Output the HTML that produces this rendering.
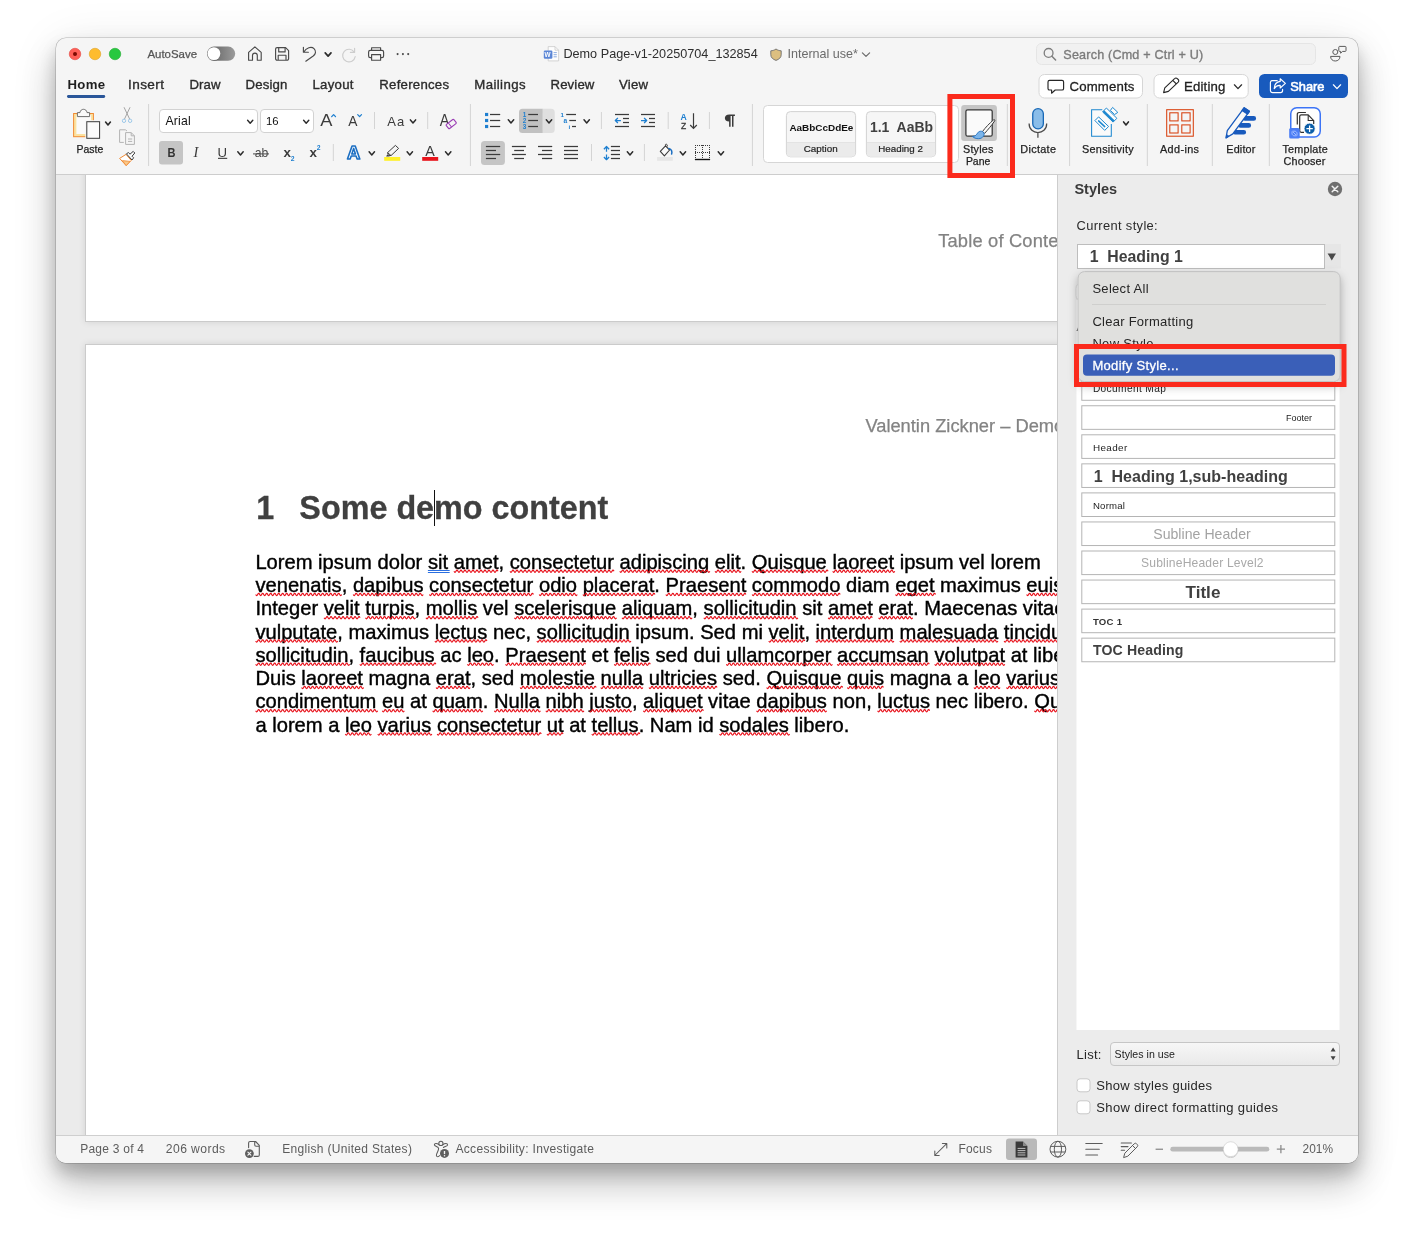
<!DOCTYPE html>
<html lang="en"><head><meta charset="utf-8"><title>Demo Page-v1-20250704_132854</title>
<style>
html,body{margin:0;padding:0;background:#fff;}
body{width:1414px;height:1237px;position:relative;overflow:hidden;font-family:"Liberation Sans",sans-serif;}
#win{position:absolute;left:56px;top:38px;width:1302px;height:1125px;border-radius:10px;background:#f5f5f5;
 box-shadow:0 0 0 0.5px rgba(0,0,0,.26),0 10px 16px rgba(0,0,0,.18),0 22px 36px rgba(0,0,0,.20),0 6px 50px rgba(0,0,0,.09);}
#doc{position:absolute;left:56px;top:175px;width:1001px;height:960px;background:#ebebeb;overflow:hidden;}
.page{position:absolute;background:#fff;border:1px solid #cbcbcb;box-sizing:border-box;box-shadow:0 0 7px rgba(0,0,0,.10);}
#doc .ln{opacity:.999;-webkit-text-stroke:0.4px #000;position:absolute;left:199.4px;white-space:nowrap;font-size:20.17px;line-height:24px;color:#000;}
#doc .hd{opacity:.999;position:absolute;white-space:nowrap;font-size:18.3px;line-height:22px;color:#838383;-webkit-text-stroke:0.25px #838383;}
#doc h1{opacity:.999;position:absolute;margin:0;white-space:pre;font-size:32.33px;line-height:38px;font-weight:700;color:#404040;-webkit-text-stroke:0.3px #404040;}
#ov{position:absolute;left:0;top:0;width:1414px;height:1237px;opacity:.999;}
#ov text{font-family:"Liberation Sans",sans-serif;white-space:pre;}
</style></head>
<body>
<div id="win"></div>
<div id="doc">
<div class="page" style="left:29px;top:-30px;width:1100px;height:177px"></div>
<div class="page" style="left:29px;top:169px;width:1100px;height:900px"></div>
<div class="hd" style="left:882.2px;top:55.1px;letter-spacing:.18px">Table of Contents</div>
<div class="hd" style="left:809.4px;top:240px">Valentin Zickner – Demo Page</div>
<h1 style="left:200.2px;top:313.7px"><span>1</span><span style="margin-left:25.2px">Some demo content</span></h1>
<div style="position:absolute;left:378px;top:315px;width:1px;height:36px;background:#111"></div>
<div class="ln" style="top:374.83px">Lorem ipsum dolor <span class="gr">sit</span> <span class="sq">amet</span>, <span class="sq">consectetur</span> <span class="sq">adipiscing</span> <span class="sq">elit</span>. <span class="sq">Quisque</span> <span class="sq">laoreet</span> ipsum vel lorem</div>
<div class="ln" style="top:398.09px"><span class="sq">venenatis</span>, <span class="sq">dapibus</span> <span class="sq">consectetur</span> <span class="sq">odio</span> <span class="sq">placerat</span>. <span class="sq">Praesent</span> <span class="sq">commodo</span> diam <span class="sq">eget</span> maximus <span class="sq">euismod</span>.</div>
<div class="ln" style="top:421.35px">Integer <span class="sq">velit</span> <span class="sq">turpis</span>, <span class="sq">mollis</span> vel <span class="sq">scelerisque</span> <span class="sq">aliquam</span>, <span class="sq">sollicitudin</span> sit <span class="sq">amet</span> <span class="sq">erat</span>. Maecenas vitae</div>
<div class="ln" style="top:444.61px"><span class="sq">vulputate</span>, maximus <span class="sq">lectus</span> nec, <span class="sq">sollicitudin</span> ipsum. Sed mi <span class="sq">velit</span>, <span class="sq">interdum</span> <span class="sq">malesuada</span> <span class="sq">tincidunt</span></div>
<div class="ln" style="top:467.87px"><span class="sq">sollicitudin</span>, <span class="sq">faucibus</span> ac <span class="sq">leo</span>. <span class="sq">Praesent</span> et <span class="sq">felis</span> sed dui <span class="sq">ullamcorper</span> <span class="sq">accumsan</span> <span class="sq">volutpat</span> at libero.</div>
<div class="ln" style="top:491.13px">Duis <span class="sq">laoreet</span> magna <span class="sq">erat</span>, sed <span class="sq">molestie</span> <span class="sq">nulla</span> <span class="sq">ultricies</span> sed. <span class="sq">Quisque</span> <span class="sq">quis</span> magna a <span class="sq">leo</span> <span class="sq">varius</span></div>
<div class="ln" style="top:514.39px"><span class="sq">condimentum</span> <span class="sq">eu</span> at <span class="sq">quam</span>. <span class="sq">Nulla</span> <span class="sq">nibh</span> <span class="sq">justo</span>, <span class="sq">aliquet</span> vitae <span class="sq">dapibus</span> non, <span class="sq">luctus</span> nec libero. <span class="sq">Quisque</span></div>
<div class="ln" style="top:537.65px">a lorem a <span class="sq">leo</span> <span class="sq">varius</span> <span class="sq">consectetur</span> <span class="sq">ut</span> at <span class="sq">tellus</span>. Nam id <span class="sq">sodales</span> libero.</div>
</div>
<svg style="position:absolute;left:0;top:0" width="1414" height="1237" viewBox="0 0 1414 1237"><path d="M427.9 570.50 H449.7 M427.9 572.50 H449.7" stroke="#2b6fe0" stroke-width="1" fill="none"/><path d="M453.99 571.25 q1.00 2.30 2.00 0 t2.00 0 t2.00 0 t2.00 0 t2.00 0 t2.00 0 t2.00 0 t2.00 0 t2.00 0 t2.00 0 t2.00 0 t2.00 0 t2.00 0 t2.00 0 t2.00 0 t2.00 0 t2.00 0 t2.00 0 t2.00 0 t2.00 0 t2.00 0 t2.00 0" stroke="#e8101a" stroke-width="1.1" fill="none"/><path d="M510.00 571.25 q1.00 2.30 2.00 0 t2.00 0 t2.00 0 t2.00 0 t2.00 0 t2.00 0 t2.00 0 t2.00 0 t2.00 0 t2.00 0 t2.00 0 t2.00 0 t2.00 0 t2.00 0 t2.00 0 t2.00 0 t2.00 0 t2.00 0 t2.00 0 t2.00 0 t2.00 0 t2.00 0 t2.00 0 t2.00 0 t2.00 0 t2.00 0 t2.00 0 t2.00 0 t2.00 0 t2.00 0 t2.00 0 t2.00 0 t2.00 0 t2.00 0 t2.00 0 t2.00 0 t2.00 0 t2.00 0 t2.00 0 t2.00 0 t2.00 0 t2.00 0 t2.00 0 t2.00 0 t2.00 0 t2.00 0 t2.00 0 t2.00 0 t2.00 0 t2.00 0 t2.00 0 t2.00 0" stroke="#e8101a" stroke-width="1.1" fill="none"/><path d="M619.82 571.25 q1.00 2.30 2.00 0 t2.00 0 t2.00 0 t2.00 0 t2.00 0 t2.00 0 t2.00 0 t2.00 0 t2.00 0 t2.00 0 t2.00 0 t2.00 0 t2.00 0 t2.00 0 t2.00 0 t2.00 0 t2.00 0 t2.00 0 t2.00 0 t2.00 0 t2.00 0 t2.00 0 t2.00 0 t2.00 0 t2.00 0 t2.00 0 t2.00 0 t2.00 0 t2.00 0 t2.00 0 t2.00 0 t2.00 0 t2.00 0 t2.00 0 t2.00 0 t2.00 0 t2.00 0 t2.00 0 t2.00 0 t2.00 0 t2.00 0 t2.00 0 t2.00 0 t2.00 0 t2.00 0" stroke="#e8101a" stroke-width="1.1" fill="none"/><path d="M715.07 571.25 q1.00 2.30 2.00 0 t2.00 0 t2.00 0 t2.00 0 t2.00 0 t2.00 0 t2.00 0 t2.00 0 t2.00 0 t2.00 0 t2.00 0 t2.00 0 t2.00 0" stroke="#e8101a" stroke-width="1.1" fill="none"/><path d="M752.05 571.25 q1.00 2.30 2.00 0 t2.00 0 t2.00 0 t2.00 0 t2.00 0 t2.00 0 t2.00 0 t2.00 0 t2.00 0 t2.00 0 t2.00 0 t2.00 0 t2.00 0 t2.00 0 t2.00 0 t2.00 0 t2.00 0 t2.00 0 t2.00 0 t2.00 0 t2.00 0 t2.00 0 t2.00 0 t2.00 0 t2.00 0 t2.00 0 t2.00 0 t2.00 0 t2.00 0 t2.00 0 t2.00 0 t2.00 0 t2.00 0 t2.00 0 t2.00 0 t2.00 0 t2.00 0 t2.00 0" stroke="#e8101a" stroke-width="1.1" fill="none"/><path d="M832.74 571.25 q1.00 2.30 2.00 0 t2.00 0 t2.00 0 t2.00 0 t2.00 0 t2.00 0 t2.00 0 t2.00 0 t2.00 0 t2.00 0 t2.00 0 t2.00 0 t2.00 0 t2.00 0 t2.00 0 t2.00 0 t2.00 0 t2.00 0 t2.00 0 t2.00 0 t2.00 0 t2.00 0 t2.00 0 t2.00 0 t2.00 0 t2.00 0 t2.00 0 t2.00 0 t2.00 0 t2.00 0 t2.00 0" stroke="#e8101a" stroke-width="1.1" fill="none"/><path d="M255.69 594.50 q1.00 2.30 2.00 0 t2.00 0 t2.00 0 t2.00 0 t2.00 0 t2.00 0 t2.00 0 t2.00 0 t2.00 0 t2.00 0 t2.00 0 t2.00 0 t2.00 0 t2.00 0 t2.00 0 t2.00 0 t2.00 0 t2.00 0 t2.00 0 t2.00 0 t2.00 0 t2.00 0 t2.00 0 t2.00 0 t2.00 0 t2.00 0 t2.00 0 t2.00 0 t2.00 0 t2.00 0 t2.00 0 t2.00 0 t2.00 0 t2.00 0 t2.00 0 t2.00 0 t2.00 0 t2.00 0 t2.00 0 t2.00 0 t2.00 0 t2.00 0 t2.00 0" stroke="#e8101a" stroke-width="1.1" fill="none"/><path d="M353.19 594.50 q1.00 2.30 2.00 0 t2.00 0 t2.00 0 t2.00 0 t2.00 0 t2.00 0 t2.00 0 t2.00 0 t2.00 0 t2.00 0 t2.00 0 t2.00 0 t2.00 0 t2.00 0 t2.00 0 t2.00 0 t2.00 0 t2.00 0 t2.00 0 t2.00 0 t2.00 0 t2.00 0 t2.00 0 t2.00 0 t2.00 0 t2.00 0 t2.00 0 t2.00 0 t2.00 0 t2.00 0 t2.00 0 t2.00 0 t2.00 0 t2.00 0 t2.00 0" stroke="#e8101a" stroke-width="1.1" fill="none"/><path d="M429.41 594.50 q1.00 2.30 2.00 0 t2.00 0 t2.00 0 t2.00 0 t2.00 0 t2.00 0 t2.00 0 t2.00 0 t2.00 0 t2.00 0 t2.00 0 t2.00 0 t2.00 0 t2.00 0 t2.00 0 t2.00 0 t2.00 0 t2.00 0 t2.00 0 t2.00 0 t2.00 0 t2.00 0 t2.00 0 t2.00 0 t2.00 0 t2.00 0 t2.00 0 t2.00 0 t2.00 0 t2.00 0 t2.00 0 t2.00 0 t2.00 0 t2.00 0 t2.00 0 t2.00 0 t2.00 0 t2.00 0 t2.00 0 t2.00 0 t2.00 0 t2.00 0 t2.00 0 t2.00 0 t2.00 0 t2.00 0 t2.00 0 t2.00 0 t2.00 0 t2.00 0 t2.00 0 t2.00 0" stroke="#e8101a" stroke-width="1.1" fill="none"/><path d="M539.22 594.50 q1.00 2.30 2.00 0 t2.00 0 t2.00 0 t2.00 0 t2.00 0 t2.00 0 t2.00 0 t2.00 0 t2.00 0 t2.00 0 t2.00 0 t2.00 0 t2.00 0 t2.00 0 t2.00 0 t2.00 0 t2.00 0 t2.00 0 t2.00 0" stroke="#e8101a" stroke-width="1.1" fill="none"/><path d="M582.94 594.50 q1.00 2.30 2.00 0 t2.00 0 t2.00 0 t2.00 0 t2.00 0 t2.00 0 t2.00 0 t2.00 0 t2.00 0 t2.00 0 t2.00 0 t2.00 0 t2.00 0 t2.00 0 t2.00 0 t2.00 0 t2.00 0 t2.00 0 t2.00 0 t2.00 0 t2.00 0 t2.00 0 t2.00 0 t2.00 0 t2.00 0 t2.00 0 t2.00 0 t2.00 0 t2.00 0 t2.00 0 t2.00 0 t2.00 0 t2.00 0 t2.00 0 t2.00 0 t2.00 0" stroke="#e8101a" stroke-width="1.1" fill="none"/><path d="M665.86 594.50 q1.00 2.30 2.00 0 t2.00 0 t2.00 0 t2.00 0 t2.00 0 t2.00 0 t2.00 0 t2.00 0 t2.00 0 t2.00 0 t2.00 0 t2.00 0 t2.00 0 t2.00 0 t2.00 0 t2.00 0 t2.00 0 t2.00 0 t2.00 0 t2.00 0 t2.00 0 t2.00 0 t2.00 0 t2.00 0 t2.00 0 t2.00 0 t2.00 0 t2.00 0 t2.00 0 t2.00 0 t2.00 0 t2.00 0 t2.00 0 t2.00 0 t2.00 0 t2.00 0 t2.00 0 t2.00 0 t2.00 0 t2.00 0" stroke="#e8101a" stroke-width="1.1" fill="none"/><path d="M752.16 594.50 q1.00 2.30 2.00 0 t2.00 0 t2.00 0 t2.00 0 t2.00 0 t2.00 0 t2.00 0 t2.00 0 t2.00 0 t2.00 0 t2.00 0 t2.00 0 t2.00 0 t2.00 0 t2.00 0 t2.00 0 t2.00 0 t2.00 0 t2.00 0 t2.00 0 t2.00 0 t2.00 0 t2.00 0 t2.00 0 t2.00 0 t2.00 0 t2.00 0 t2.00 0 t2.00 0 t2.00 0 t2.00 0 t2.00 0 t2.00 0 t2.00 0 t2.00 0 t2.00 0 t2.00 0 t2.00 0 t2.00 0 t2.00 0 t2.00 0 t2.00 0 t2.00 0 t2.00 0" stroke="#e8101a" stroke-width="1.1" fill="none"/><path d="M895.55 594.50 q1.00 2.30 2.00 0 t2.00 0 t2.00 0 t2.00 0 t2.00 0 t2.00 0 t2.00 0 t2.00 0 t2.00 0 t2.00 0 t2.00 0 t2.00 0 t2.00 0 t2.00 0 t2.00 0 t2.00 0 t2.00 0 t2.00 0 t2.00 0 t2.00 0" stroke="#e8101a" stroke-width="1.1" fill="none"/><path d="M1026.63 594.50 q1.00 2.30 2.00 0 t2.00 0 t2.00 0 t2.00 0 t2.00 0 t2.00 0 t2.00 0 t2.00 0 t2.00 0 t2.00 0 t2.00 0 t2.00 0 t2.00 0 t2.00 0 t2.00 0 t2.00 0 t2.00 0 t2.00 0" stroke="#e8101a" stroke-width="1.1" fill="none"/><path d="M324.05 617.76 q1.00 2.30 2.00 0 t2.00 0 t2.00 0 t2.00 0 t2.00 0 t2.00 0 t2.00 0 t2.00 0 t2.00 0 t2.00 0 t2.00 0 t2.00 0 t2.00 0 t2.00 0 t2.00 0 t2.00 0 t2.00 0 t2.00 0" stroke="#e8101a" stroke-width="1.1" fill="none"/><path d="M365.52 617.76 q1.00 2.30 2.00 0 t2.00 0 t2.00 0 t2.00 0 t2.00 0 t2.00 0 t2.00 0 t2.00 0 t2.00 0 t2.00 0 t2.00 0 t2.00 0 t2.00 0 t2.00 0 t2.00 0 t2.00 0 t2.00 0 t2.00 0 t2.00 0 t2.00 0 t2.00 0 t2.00 0 t2.00 0 t2.00 0 t2.00 0" stroke="#e8101a" stroke-width="1.1" fill="none"/><path d="M426.02 617.76 q1.00 2.30 2.00 0 t2.00 0 t2.00 0 t2.00 0 t2.00 0 t2.00 0 t2.00 0 t2.00 0 t2.00 0 t2.00 0 t2.00 0 t2.00 0 t2.00 0 t2.00 0 t2.00 0 t2.00 0 t2.00 0 t2.00 0 t2.00 0 t2.00 0 t2.00 0 t2.00 0 t2.00 0 t2.00 0 t2.00 0 t2.00 0" stroke="#e8101a" stroke-width="1.1" fill="none"/><path d="M514.50 617.76 q1.00 2.30 2.00 0 t2.00 0 t2.00 0 t2.00 0 t2.00 0 t2.00 0 t2.00 0 t2.00 0 t2.00 0 t2.00 0 t2.00 0 t2.00 0 t2.00 0 t2.00 0 t2.00 0 t2.00 0 t2.00 0 t2.00 0 t2.00 0 t2.00 0 t2.00 0 t2.00 0 t2.00 0 t2.00 0 t2.00 0 t2.00 0 t2.00 0 t2.00 0 t2.00 0 t2.00 0 t2.00 0 t2.00 0 t2.00 0 t2.00 0 t2.00 0 t2.00 0 t2.00 0 t2.00 0 t2.00 0 t2.00 0 t2.00 0 t2.00 0 t2.00 0 t2.00 0 t2.00 0 t2.00 0 t2.00 0 t2.00 0 t2.00 0 t2.00 0 t2.00 0" stroke="#e8101a" stroke-width="1.1" fill="none"/><path d="M622.07 617.76 q1.00 2.30 2.00 0 t2.00 0 t2.00 0 t2.00 0 t2.00 0 t2.00 0 t2.00 0 t2.00 0 t2.00 0 t2.00 0 t2.00 0 t2.00 0 t2.00 0 t2.00 0 t2.00 0 t2.00 0 t2.00 0 t2.00 0 t2.00 0 t2.00 0 t2.00 0 t2.00 0 t2.00 0 t2.00 0 t2.00 0 t2.00 0 t2.00 0 t2.00 0 t2.00 0 t2.00 0 t2.00 0 t2.00 0 t2.00 0 t2.00 0 t2.00 0" stroke="#e8101a" stroke-width="1.1" fill="none"/><path d="M703.86 617.76 q1.00 2.30 2.00 0 t2.00 0 t2.00 0 t2.00 0 t2.00 0 t2.00 0 t2.00 0 t2.00 0 t2.00 0 t2.00 0 t2.00 0 t2.00 0 t2.00 0 t2.00 0 t2.00 0 t2.00 0 t2.00 0 t2.00 0 t2.00 0 t2.00 0 t2.00 0 t2.00 0 t2.00 0 t2.00 0 t2.00 0 t2.00 0 t2.00 0 t2.00 0 t2.00 0 t2.00 0 t2.00 0 t2.00 0 t2.00 0 t2.00 0 t2.00 0 t2.00 0 t2.00 0 t2.00 0 t2.00 0 t2.00 0 t2.00 0 t2.00 0 t2.00 0 t2.00 0 t2.00 0 t2.00 0 t2.00 0" stroke="#e8101a" stroke-width="1.1" fill="none"/><path d="M828.22 617.76 q1.00 2.30 2.00 0 t2.00 0 t2.00 0 t2.00 0 t2.00 0 t2.00 0 t2.00 0 t2.00 0 t2.00 0 t2.00 0 t2.00 0 t2.00 0 t2.00 0 t2.00 0 t2.00 0 t2.00 0 t2.00 0 t2.00 0 t2.00 0 t2.00 0 t2.00 0 t2.00 0" stroke="#e8101a" stroke-width="1.1" fill="none"/><path d="M878.64 617.76 q1.00 2.30 2.00 0 t2.00 0 t2.00 0 t2.00 0 t2.00 0 t2.00 0 t2.00 0 t2.00 0 t2.00 0 t2.00 0 t2.00 0 t2.00 0 t2.00 0 t2.00 0 t2.00 0 t2.00 0 t2.00 0" stroke="#e8101a" stroke-width="1.1" fill="none"/><path d="M255.69 641.03 q1.00 2.30 2.00 0 t2.00 0 t2.00 0 t2.00 0 t2.00 0 t2.00 0 t2.00 0 t2.00 0 t2.00 0 t2.00 0 t2.00 0 t2.00 0 t2.00 0 t2.00 0 t2.00 0 t2.00 0 t2.00 0 t2.00 0 t2.00 0 t2.00 0 t2.00 0 t2.00 0 t2.00 0 t2.00 0 t2.00 0 t2.00 0 t2.00 0 t2.00 0 t2.00 0 t2.00 0 t2.00 0 t2.00 0 t2.00 0 t2.00 0 t2.00 0 t2.00 0 t2.00 0 t2.00 0 t2.00 0 t2.00 0 t2.00 0" stroke="#e8101a" stroke-width="1.1" fill="none"/><path d="M434.94 641.03 q1.00 2.30 2.00 0 t2.00 0 t2.00 0 t2.00 0 t2.00 0 t2.00 0 t2.00 0 t2.00 0 t2.00 0 t2.00 0 t2.00 0 t2.00 0 t2.00 0 t2.00 0 t2.00 0 t2.00 0 t2.00 0 t2.00 0 t2.00 0 t2.00 0 t2.00 0 t2.00 0 t2.00 0 t2.00 0 t2.00 0 t2.00 0" stroke="#e8101a" stroke-width="1.1" fill="none"/><path d="M536.91 641.03 q1.00 2.30 2.00 0 t2.00 0 t2.00 0 t2.00 0 t2.00 0 t2.00 0 t2.00 0 t2.00 0 t2.00 0 t2.00 0 t2.00 0 t2.00 0 t2.00 0 t2.00 0 t2.00 0 t2.00 0 t2.00 0 t2.00 0 t2.00 0 t2.00 0 t2.00 0 t2.00 0 t2.00 0 t2.00 0 t2.00 0 t2.00 0 t2.00 0 t2.00 0 t2.00 0 t2.00 0 t2.00 0 t2.00 0 t2.00 0 t2.00 0 t2.00 0 t2.00 0 t2.00 0 t2.00 0 t2.00 0 t2.00 0 t2.00 0 t2.00 0 t2.00 0 t2.00 0 t2.00 0 t2.00 0 t2.00 0" stroke="#e8101a" stroke-width="1.1" fill="none"/><path d="M768.82 641.03 q1.00 2.30 2.00 0 t2.00 0 t2.00 0 t2.00 0 t2.00 0 t2.00 0 t2.00 0 t2.00 0 t2.00 0 t2.00 0 t2.00 0 t2.00 0 t2.00 0 t2.00 0 t2.00 0 t2.00 0 t2.00 0 t2.00 0" stroke="#e8101a" stroke-width="1.1" fill="none"/><path d="M815.88 641.03 q1.00 2.30 2.00 0 t2.00 0 t2.00 0 t2.00 0 t2.00 0 t2.00 0 t2.00 0 t2.00 0 t2.00 0 t2.00 0 t2.00 0 t2.00 0 t2.00 0 t2.00 0 t2.00 0 t2.00 0 t2.00 0 t2.00 0 t2.00 0 t2.00 0 t2.00 0 t2.00 0 t2.00 0 t2.00 0 t2.00 0 t2.00 0 t2.00 0 t2.00 0 t2.00 0 t2.00 0 t2.00 0 t2.00 0 t2.00 0 t2.00 0 t2.00 0 t2.00 0 t2.00 0 t2.00 0 t2.00 0" stroke="#e8101a" stroke-width="1.1" fill="none"/><path d="M899.91 641.03 q1.00 2.30 2.00 0 t2.00 0 t2.00 0 t2.00 0 t2.00 0 t2.00 0 t2.00 0 t2.00 0 t2.00 0 t2.00 0 t2.00 0 t2.00 0 t2.00 0 t2.00 0 t2.00 0 t2.00 0 t2.00 0 t2.00 0 t2.00 0 t2.00 0 t2.00 0 t2.00 0 t2.00 0 t2.00 0 t2.00 0 t2.00 0 t2.00 0 t2.00 0 t2.00 0 t2.00 0 t2.00 0 t2.00 0 t2.00 0 t2.00 0 t2.00 0 t2.00 0 t2.00 0 t2.00 0 t2.00 0 t2.00 0 t2.00 0 t2.00 0 t2.00 0 t2.00 0 t2.00 0 t2.00 0 t2.00 0 t2.00 0 t2.00 0" stroke="#e8101a" stroke-width="1.1" fill="none"/><path d="M1004.13 641.03 q1.00 2.30 2.00 0 t2.00 0 t2.00 0 t2.00 0 t2.00 0 t2.00 0 t2.00 0 t2.00 0 t2.00 0 t2.00 0 t2.00 0 t2.00 0 t2.00 0 t2.00 0 t2.00 0 t2.00 0 t2.00 0 t2.00 0 t2.00 0 t2.00 0 t2.00 0 t2.00 0 t2.00 0 t2.00 0 t2.00 0 t2.00 0 t2.00 0 t2.00 0 t2.00 0" stroke="#e8101a" stroke-width="1.1" fill="none"/><path d="M255.69 664.28 q1.00 2.30 2.00 0 t2.00 0 t2.00 0 t2.00 0 t2.00 0 t2.00 0 t2.00 0 t2.00 0 t2.00 0 t2.00 0 t2.00 0 t2.00 0 t2.00 0 t2.00 0 t2.00 0 t2.00 0 t2.00 0 t2.00 0 t2.00 0 t2.00 0 t2.00 0 t2.00 0 t2.00 0 t2.00 0 t2.00 0 t2.00 0 t2.00 0 t2.00 0 t2.00 0 t2.00 0 t2.00 0 t2.00 0 t2.00 0 t2.00 0 t2.00 0 t2.00 0 t2.00 0 t2.00 0 t2.00 0 t2.00 0 t2.00 0 t2.00 0 t2.00 0 t2.00 0 t2.00 0 t2.00 0 t2.00 0" stroke="#e8101a" stroke-width="1.1" fill="none"/><path d="M359.89 664.28 q1.00 2.30 2.00 0 t2.00 0 t2.00 0 t2.00 0 t2.00 0 t2.00 0 t2.00 0 t2.00 0 t2.00 0 t2.00 0 t2.00 0 t2.00 0 t2.00 0 t2.00 0 t2.00 0 t2.00 0 t2.00 0 t2.00 0 t2.00 0 t2.00 0 t2.00 0 t2.00 0 t2.00 0 t2.00 0 t2.00 0 t2.00 0 t2.00 0 t2.00 0 t2.00 0 t2.00 0 t2.00 0 t2.00 0 t2.00 0 t2.00 0 t2.00 0 t2.00 0 t2.00 0 t2.00 0" stroke="#e8101a" stroke-width="1.1" fill="none"/><path d="M467.47 664.28 q1.00 2.30 2.00 0 t2.00 0 t2.00 0 t2.00 0 t2.00 0 t2.00 0 t2.00 0 t2.00 0 t2.00 0 t2.00 0 t2.00 0 t2.00 0 t2.00 0" stroke="#e8101a" stroke-width="1.1" fill="none"/><path d="M505.58 664.28 q1.00 2.30 2.00 0 t2.00 0 t2.00 0 t2.00 0 t2.00 0 t2.00 0 t2.00 0 t2.00 0 t2.00 0 t2.00 0 t2.00 0 t2.00 0 t2.00 0 t2.00 0 t2.00 0 t2.00 0 t2.00 0 t2.00 0 t2.00 0 t2.00 0 t2.00 0 t2.00 0 t2.00 0 t2.00 0 t2.00 0 t2.00 0 t2.00 0 t2.00 0 t2.00 0 t2.00 0 t2.00 0 t2.00 0 t2.00 0 t2.00 0 t2.00 0 t2.00 0 t2.00 0 t2.00 0 t2.00 0 t2.00 0" stroke="#e8101a" stroke-width="1.1" fill="none"/><path d="M614.28 664.28 q1.00 2.30 2.00 0 t2.00 0 t2.00 0 t2.00 0 t2.00 0 t2.00 0 t2.00 0 t2.00 0 t2.00 0 t2.00 0 t2.00 0 t2.00 0 t2.00 0 t2.00 0 t2.00 0 t2.00 0 t2.00 0 t2.00 0" stroke="#e8101a" stroke-width="1.1" fill="none"/><path d="M726.35 664.28 q1.00 2.30 2.00 0 t2.00 0 t2.00 0 t2.00 0 t2.00 0 t2.00 0 t2.00 0 t2.00 0 t2.00 0 t2.00 0 t2.00 0 t2.00 0 t2.00 0 t2.00 0 t2.00 0 t2.00 0 t2.00 0 t2.00 0 t2.00 0 t2.00 0 t2.00 0 t2.00 0 t2.00 0 t2.00 0 t2.00 0 t2.00 0 t2.00 0 t2.00 0 t2.00 0 t2.00 0 t2.00 0 t2.00 0 t2.00 0 t2.00 0 t2.00 0 t2.00 0 t2.00 0 t2.00 0 t2.00 0 t2.00 0 t2.00 0 t2.00 0 t2.00 0 t2.00 0 t2.00 0 t2.00 0 t2.00 0 t2.00 0 t2.00 0 t2.00 0 t2.00 0 t2.00 0 t2.00 0" stroke="#e8101a" stroke-width="1.1" fill="none"/><path d="M837.27 664.28 q1.00 2.30 2.00 0 t2.00 0 t2.00 0 t2.00 0 t2.00 0 t2.00 0 t2.00 0 t2.00 0 t2.00 0 t2.00 0 t2.00 0 t2.00 0 t2.00 0 t2.00 0 t2.00 0 t2.00 0 t2.00 0 t2.00 0 t2.00 0 t2.00 0 t2.00 0 t2.00 0 t2.00 0 t2.00 0 t2.00 0 t2.00 0 t2.00 0 t2.00 0 t2.00 0 t2.00 0 t2.00 0 t2.00 0 t2.00 0 t2.00 0 t2.00 0 t2.00 0 t2.00 0 t2.00 0 t2.00 0 t2.00 0 t2.00 0 t2.00 0 t2.00 0 t2.00 0 t2.00 0 t2.00 0" stroke="#e8101a" stroke-width="1.1" fill="none"/><path d="M934.75 664.28 q1.00 2.30 2.00 0 t2.00 0 t2.00 0 t2.00 0 t2.00 0 t2.00 0 t2.00 0 t2.00 0 t2.00 0 t2.00 0 t2.00 0 t2.00 0 t2.00 0 t2.00 0 t2.00 0 t2.00 0 t2.00 0 t2.00 0 t2.00 0 t2.00 0 t2.00 0 t2.00 0 t2.00 0 t2.00 0 t2.00 0 t2.00 0 t2.00 0 t2.00 0 t2.00 0 t2.00 0 t2.00 0 t2.00 0 t2.00 0 t2.00 0 t2.00 0" stroke="#e8101a" stroke-width="1.1" fill="none"/><path d="M301.63 687.55 q1.00 2.30 2.00 0 t2.00 0 t2.00 0 t2.00 0 t2.00 0 t2.00 0 t2.00 0 t2.00 0 t2.00 0 t2.00 0 t2.00 0 t2.00 0 t2.00 0 t2.00 0 t2.00 0 t2.00 0 t2.00 0 t2.00 0 t2.00 0 t2.00 0 t2.00 0 t2.00 0 t2.00 0 t2.00 0 t2.00 0 t2.00 0 t2.00 0 t2.00 0 t2.00 0 t2.00 0 t2.00 0" stroke="#e8101a" stroke-width="1.1" fill="none"/><path d="M436.11 687.55 q1.00 2.30 2.00 0 t2.00 0 t2.00 0 t2.00 0 t2.00 0 t2.00 0 t2.00 0 t2.00 0 t2.00 0 t2.00 0 t2.00 0 t2.00 0 t2.00 0 t2.00 0 t2.00 0 t2.00 0 t2.00 0" stroke="#e8101a" stroke-width="1.1" fill="none"/><path d="M520.16 687.55 q1.00 2.30 2.00 0 t2.00 0 t2.00 0 t2.00 0 t2.00 0 t2.00 0 t2.00 0 t2.00 0 t2.00 0 t2.00 0 t2.00 0 t2.00 0 t2.00 0 t2.00 0 t2.00 0 t2.00 0 t2.00 0 t2.00 0 t2.00 0 t2.00 0 t2.00 0 t2.00 0 t2.00 0 t2.00 0 t2.00 0 t2.00 0 t2.00 0 t2.00 0 t2.00 0 t2.00 0 t2.00 0 t2.00 0 t2.00 0 t2.00 0 t2.00 0 t2.00 0 t2.00 0 t2.00 0" stroke="#e8101a" stroke-width="1.1" fill="none"/><path d="M600.83 687.55 q1.00 2.30 2.00 0 t2.00 0 t2.00 0 t2.00 0 t2.00 0 t2.00 0 t2.00 0 t2.00 0 t2.00 0 t2.00 0 t2.00 0 t2.00 0 t2.00 0 t2.00 0 t2.00 0 t2.00 0 t2.00 0 t2.00 0 t2.00 0 t2.00 0 t2.00 0" stroke="#e8101a" stroke-width="1.1" fill="none"/><path d="M649.03 687.55 q1.00 2.30 2.00 0 t2.00 0 t2.00 0 t2.00 0 t2.00 0 t2.00 0 t2.00 0 t2.00 0 t2.00 0 t2.00 0 t2.00 0 t2.00 0 t2.00 0 t2.00 0 t2.00 0 t2.00 0 t2.00 0 t2.00 0 t2.00 0 t2.00 0 t2.00 0 t2.00 0 t2.00 0 t2.00 0 t2.00 0 t2.00 0 t2.00 0 t2.00 0 t2.00 0 t2.00 0 t2.00 0 t2.00 0 t2.00 0 t2.00 0" stroke="#e8101a" stroke-width="1.1" fill="none"/><path d="M766.67 687.55 q1.00 2.30 2.00 0 t2.00 0 t2.00 0 t2.00 0 t2.00 0 t2.00 0 t2.00 0 t2.00 0 t2.00 0 t2.00 0 t2.00 0 t2.00 0 t2.00 0 t2.00 0 t2.00 0 t2.00 0 t2.00 0 t2.00 0 t2.00 0 t2.00 0 t2.00 0 t2.00 0 t2.00 0 t2.00 0 t2.00 0 t2.00 0 t2.00 0 t2.00 0 t2.00 0 t2.00 0 t2.00 0 t2.00 0 t2.00 0 t2.00 0 t2.00 0 t2.00 0 t2.00 0 t2.00 0" stroke="#e8101a" stroke-width="1.1" fill="none"/><path d="M847.36 687.55 q1.00 2.30 2.00 0 t2.00 0 t2.00 0 t2.00 0 t2.00 0 t2.00 0 t2.00 0 t2.00 0 t2.00 0 t2.00 0 t2.00 0 t2.00 0 t2.00 0 t2.00 0 t2.00 0 t2.00 0 t2.00 0 t2.00 0" stroke="#e8101a" stroke-width="1.1" fill="none"/><path d="M973.99 687.55 q1.00 2.30 2.00 0 t2.00 0 t2.00 0 t2.00 0 t2.00 0 t2.00 0 t2.00 0 t2.00 0 t2.00 0 t2.00 0 t2.00 0 t2.00 0 t2.00 0" stroke="#e8101a" stroke-width="1.1" fill="none"/><path d="M1006.50 687.55 q1.00 2.30 2.00 0 t2.00 0 t2.00 0 t2.00 0 t2.00 0 t2.00 0 t2.00 0 t2.00 0 t2.00 0 t2.00 0 t2.00 0 t2.00 0 t2.00 0 t2.00 0 t2.00 0 t2.00 0 t2.00 0 t2.00 0 t2.00 0 t2.00 0 t2.00 0 t2.00 0 t2.00 0 t2.00 0 t2.00 0 t2.00 0 t2.00 0" stroke="#e8101a" stroke-width="1.1" fill="none"/><path d="M255.69 710.80 q1.00 2.30 2.00 0 t2.00 0 t2.00 0 t2.00 0 t2.00 0 t2.00 0 t2.00 0 t2.00 0 t2.00 0 t2.00 0 t2.00 0 t2.00 0 t2.00 0 t2.00 0 t2.00 0 t2.00 0 t2.00 0 t2.00 0 t2.00 0 t2.00 0 t2.00 0 t2.00 0 t2.00 0 t2.00 0 t2.00 0 t2.00 0 t2.00 0 t2.00 0 t2.00 0 t2.00 0 t2.00 0 t2.00 0 t2.00 0 t2.00 0 t2.00 0 t2.00 0 t2.00 0 t2.00 0 t2.00 0 t2.00 0 t2.00 0 t2.00 0 t2.00 0 t2.00 0 t2.00 0 t2.00 0 t2.00 0 t2.00 0 t2.00 0 t2.00 0 t2.00 0 t2.00 0 t2.00 0 t2.00 0 t2.00 0 t2.00 0 t2.00 0 t2.00 0 t2.00 0 t2.00 0 t2.00 0" stroke="#e8101a" stroke-width="1.1" fill="none"/><path d="M382.30 710.80 q1.00 2.30 2.00 0 t2.00 0 t2.00 0 t2.00 0 t2.00 0 t2.00 0 t2.00 0 t2.00 0 t2.00 0 t2.00 0 t2.00 0" stroke="#e8101a" stroke-width="1.1" fill="none"/><path d="M432.74 710.80 q1.00 2.30 2.00 0 t2.00 0 t2.00 0 t2.00 0 t2.00 0 t2.00 0 t2.00 0 t2.00 0 t2.00 0 t2.00 0 t2.00 0 t2.00 0 t2.00 0 t2.00 0 t2.00 0 t2.00 0 t2.00 0 t2.00 0 t2.00 0 t2.00 0 t2.00 0 t2.00 0 t2.00 0 t2.00 0 t2.00 0" stroke="#e8101a" stroke-width="1.1" fill="none"/><path d="M494.36 710.80 q1.00 2.30 2.00 0 t2.00 0 t2.00 0 t2.00 0 t2.00 0 t2.00 0 t2.00 0 t2.00 0 t2.00 0 t2.00 0 t2.00 0 t2.00 0 t2.00 0 t2.00 0 t2.00 0 t2.00 0 t2.00 0 t2.00 0 t2.00 0 t2.00 0 t2.00 0 t2.00 0 t2.00 0" stroke="#e8101a" stroke-width="1.1" fill="none"/><path d="M545.91 710.80 q1.00 2.30 2.00 0 t2.00 0 t2.00 0 t2.00 0 t2.00 0 t2.00 0 t2.00 0 t2.00 0 t2.00 0 t2.00 0 t2.00 0 t2.00 0 t2.00 0 t2.00 0 t2.00 0 t2.00 0 t2.00 0 t2.00 0 t2.00 0" stroke="#e8101a" stroke-width="1.1" fill="none"/><path d="M589.63 710.80 q1.00 2.30 2.00 0 t2.00 0 t2.00 0 t2.00 0 t2.00 0 t2.00 0 t2.00 0 t2.00 0 t2.00 0 t2.00 0 t2.00 0 t2.00 0 t2.00 0 t2.00 0 t2.00 0 t2.00 0 t2.00 0 t2.00 0 t2.00 0 t2.00 0 t2.00 0" stroke="#e8101a" stroke-width="1.1" fill="none"/><path d="M643.41 710.80 q1.00 2.30 2.00 0 t2.00 0 t2.00 0 t2.00 0 t2.00 0 t2.00 0 t2.00 0 t2.00 0 t2.00 0 t2.00 0 t2.00 0 t2.00 0 t2.00 0 t2.00 0 t2.00 0 t2.00 0 t2.00 0 t2.00 0 t2.00 0 t2.00 0 t2.00 0 t2.00 0 t2.00 0 t2.00 0 t2.00 0 t2.00 0 t2.00 0 t2.00 0 t2.00 0 t2.00 0" stroke="#e8101a" stroke-width="1.1" fill="none"/><path d="M756.60 710.80 q1.00 2.30 2.00 0 t2.00 0 t2.00 0 t2.00 0 t2.00 0 t2.00 0 t2.00 0 t2.00 0 t2.00 0 t2.00 0 t2.00 0 t2.00 0 t2.00 0 t2.00 0 t2.00 0 t2.00 0 t2.00 0 t2.00 0 t2.00 0 t2.00 0 t2.00 0 t2.00 0 t2.00 0 t2.00 0 t2.00 0 t2.00 0 t2.00 0 t2.00 0 t2.00 0 t2.00 0 t2.00 0 t2.00 0 t2.00 0 t2.00 0 t2.00 0" stroke="#e8101a" stroke-width="1.1" fill="none"/><path d="M877.64 710.80 q1.00 2.30 2.00 0 t2.00 0 t2.00 0 t2.00 0 t2.00 0 t2.00 0 t2.00 0 t2.00 0 t2.00 0 t2.00 0 t2.00 0 t2.00 0 t2.00 0 t2.00 0 t2.00 0 t2.00 0 t2.00 0 t2.00 0 t2.00 0 t2.00 0 t2.00 0 t2.00 0 t2.00 0 t2.00 0 t2.00 0 t2.00 0" stroke="#e8101a" stroke-width="1.1" fill="none"/><path d="M1034.50 710.80 q1.00 2.30 2.00 0 t2.00 0 t2.00 0 t2.00 0 t2.00 0 t2.00 0 t2.00 0 t2.00 0 t2.00 0 t2.00 0 t2.00 0 t2.00 0 t2.00 0 t2.00 0" stroke="#e8101a" stroke-width="1.1" fill="none"/><path d="M345.32 734.06 q1.00 2.30 2.00 0 t2.00 0 t2.00 0 t2.00 0 t2.00 0 t2.00 0 t2.00 0 t2.00 0 t2.00 0 t2.00 0 t2.00 0 t2.00 0 t2.00 0" stroke="#e8101a" stroke-width="1.1" fill="none"/><path d="M377.83 734.06 q1.00 2.30 2.00 0 t2.00 0 t2.00 0 t2.00 0 t2.00 0 t2.00 0 t2.00 0 t2.00 0 t2.00 0 t2.00 0 t2.00 0 t2.00 0 t2.00 0 t2.00 0 t2.00 0 t2.00 0 t2.00 0 t2.00 0 t2.00 0 t2.00 0 t2.00 0 t2.00 0 t2.00 0 t2.00 0 t2.00 0 t2.00 0 t2.00 0" stroke="#e8101a" stroke-width="1.1" fill="none"/><path d="M437.22 734.06 q1.00 2.30 2.00 0 t2.00 0 t2.00 0 t2.00 0 t2.00 0 t2.00 0 t2.00 0 t2.00 0 t2.00 0 t2.00 0 t2.00 0 t2.00 0 t2.00 0 t2.00 0 t2.00 0 t2.00 0 t2.00 0 t2.00 0 t2.00 0 t2.00 0 t2.00 0 t2.00 0 t2.00 0 t2.00 0 t2.00 0 t2.00 0 t2.00 0 t2.00 0 t2.00 0 t2.00 0 t2.00 0 t2.00 0 t2.00 0 t2.00 0 t2.00 0 t2.00 0 t2.00 0 t2.00 0 t2.00 0 t2.00 0 t2.00 0 t2.00 0 t2.00 0 t2.00 0 t2.00 0 t2.00 0 t2.00 0 t2.00 0 t2.00 0 t2.00 0 t2.00 0 t2.00 0" stroke="#e8101a" stroke-width="1.1" fill="none"/><path d="M547.03 734.06 q1.00 2.30 2.00 0 t2.00 0 t2.00 0 t2.00 0 t2.00 0 t2.00 0 t2.00 0 t2.00 0" stroke="#e8101a" stroke-width="1.1" fill="none"/><path d="M591.86 734.06 q1.00 2.30 2.00 0 t2.00 0 t2.00 0 t2.00 0 t2.00 0 t2.00 0 t2.00 0 t2.00 0 t2.00 0 t2.00 0 t2.00 0 t2.00 0 t2.00 0 t2.00 0 t2.00 0 t2.00 0 t2.00 0 t2.00 0 t2.00 0 t2.00 0 t2.00 0 t2.00 0 t2.00 0 t2.00 0" stroke="#e8101a" stroke-width="1.1" fill="none"/><path d="M719.58 734.06 q1.00 2.30 2.00 0 t2.00 0 t2.00 0 t2.00 0 t2.00 0 t2.00 0 t2.00 0 t2.00 0 t2.00 0 t2.00 0 t2.00 0 t2.00 0 t2.00 0 t2.00 0 t2.00 0 t2.00 0 t2.00 0 t2.00 0 t2.00 0 t2.00 0 t2.00 0 t2.00 0 t2.00 0 t2.00 0 t2.00 0 t2.00 0 t2.00 0 t2.00 0 t2.00 0 t2.00 0 t2.00 0 t2.00 0 t2.00 0 t2.00 0 t2.00 0" stroke="#e8101a" stroke-width="1.1" fill="none"/></svg>
<svg id="ov" width="1414" height="1237" viewBox="0 0 1414 1237">
<defs><linearGradient id="tg" x1="0" y1="0" x2="1" y2="0"><stop offset="0" stop-color="#5c5c5c"/><stop offset="1" stop-color="#9b9b9b"/></linearGradient><linearGradient id="sel" x1="0" y1="0" x2="0" y2="1"><stop offset="0" stop-color="#f7f7f7"/><stop offset="1" stop-color="#e9e9e9"/></linearGradient><filter id="ks" x="-30%" y="-30%" width="160%" height="180%"><feDropShadow dx="0" dy="0.6" stdDeviation="0.7" flood-color="#000" flood-opacity="0.35"/></filter><filter id="ms" x="-10%" y="-10%" width="120%" height="140%"><feDropShadow dx="0" dy="4" stdDeviation="5" flood-color="#000" flood-opacity="0.28"/></filter></defs>
<circle cx="75" cy="54" r="5.75" fill="#fe5f57" stroke="#e2463f" stroke-width="0.6"/>
<circle cx="95" cy="54" r="5.75" fill="#febc2e" stroke="#dea123" stroke-width="0.6"/>
<circle cx="115" cy="54" r="5.75" fill="#28c840" stroke="#1faa2e" stroke-width="0.6"/>
<circle cx="75" cy="54" r="2" fill="#7d0a02"/>
<text x="147.4" y="58.3" font-size="11.44" font-weight="400" fill="#555" textLength="49.6" lengthAdjust="spacing" stroke="#555" stroke-width="0.25">AutoSave</text>
<rect x="207" y="46.6" width="28.2" height="14.2" rx="7.1" fill="url(#tg)"/>
<circle cx="213.9" cy="53.6" r="6.4" fill="#fff" filter="url(#ks)"/>
<path d="M248.6 60.2 V52.4 L254.9 46.9 L261.2 52.4 V60.2 H257.3 V55.6 a2.4 2.4 0 0 0 -4.8 0 V60.2 Z" fill="none" stroke="#4a4a4a" stroke-width="1.15" stroke-linejoin="round"/>
<path d="M275.6 49.1 a1.5 1.5 0 0 1 1.5 -1.5 H285.6 L288.6 50.6 V58.7 a1.5 1.5 0 0 1 -1.5 1.5 H277.1 a1.5 1.5 0 0 1 -1.5 -1.5 Z" fill="none" stroke="#4a4a4a" stroke-width="1.15" stroke-linejoin="round"/>
<path d="M278.7 47.8 V51.9 H285.1 V47.8 M278.2 60 V55.2 H286 V60" fill="none" stroke="#4a4a4a" stroke-width="1.15" stroke-linejoin="round"/>
<path d="M303.4 47.2 V52.2 H308.4 M303.8 52 C306.2 47.6 311.4 46 314 48.6 C316.6 51.2 315.6 54.2 313.2 56 L305.8 61.2" fill="none" stroke="#4a4a4a" stroke-width="1.15" stroke-linecap="round" stroke-linejoin="round"/>
<path d="M325.20 52.90 L328.10 56.10 L331.00 52.90" fill="none" stroke="#2b2b2b" stroke-width="1.7" stroke-linecap="round" stroke-linejoin="round"/>
<path d="M354.6 48.2 V52.4 H350.4 M354.3 52.2 A6.3 6.3 0 1 0 355.2 56.6" fill="none" stroke="#cdcdcd" stroke-width="1.15" stroke-linecap="round" stroke-linejoin="round"/>
<path d="M371.6 50.4 V47.7 H380.6 V50.4 M371.6 57.6 H370.3 a1.7 1.7 0 0 1 -1.7 -1.7 V52.1 a1.7 1.7 0 0 1 1.7 -1.7 H381.9 a1.7 1.7 0 0 1 1.7 1.7 V55.9 a1.7 1.7 0 0 1 -1.7 1.7 H380.6 M371.6 54.6 H380.6 V60.2 H371.6 Z" fill="none" stroke="#4a4a4a" stroke-width="1.15" stroke-linejoin="round"/>
<circle cx="397.6" cy="54.1" r="1.05" fill="#4a4a4a"/>
<circle cx="402.9" cy="54.1" r="1.05" fill="#4a4a4a"/>
<circle cx="408.2" cy="54.1" r="1.05" fill="#4a4a4a"/>
<path d="M548.2 46.6 H555 L558.6 50.2 V60.9 H548.2 Z" fill="#fdfdfd" stroke="#c9c9c9" stroke-width="0.8" stroke-linejoin="round"/>
<path d="M555 46.6 V50.2 H558.6" fill="none" stroke="#c9c9c9" stroke-width="0.8"/>
<rect x="543.8" y="50.6" width="8.6" height="8.2" rx="1.2" fill="#5b86d6"/>
<text x="544.5" y="57.4" font-size="6.4" font-weight="700" fill="#fff">W</text>
<path d="M553.6 52.6 H556.8 M553.6 54.7 H556.8 M553.6 56.8 H556.8" stroke="#7ea0dd" stroke-width="0.9"/>
<text x="563.4" y="58.3" font-size="12.66" font-weight="400" fill="#2e2e2e" textLength="194.3" lengthAdjust="spacing" >Demo Page-v1-20250704_132854</text>
<path d="M776 49 C777.8 50.3 779.4 50.7 781.2 50.8 V54.8 C781.2 57.6 779 59.3 776 60.4 C773 59.3 770.8 57.6 770.8 54.8 V50.8 C772.6 50.7 774.2 50.3 776 49 Z" fill="#dcbf80" stroke="#6d6d6d" stroke-width="0.9" stroke-linejoin="round"/>
<text x="787.4" y="58.3" font-size="12.57" font-weight="400" fill="#6b6b6b" textLength="70.6" lengthAdjust="spacing" >Internal use*</text>
<path d="M862.40 52.80 L866.00 56.40 L869.60 52.80" fill="none" stroke="#6b6b6b" stroke-width="1.2" stroke-linecap="round" stroke-linejoin="round"/>
<rect x="1036.5" y="43.5" width="279" height="21" rx="5" fill="#f1f1f1" stroke="#e5e5e5" stroke-width="1"/>
<circle cx="1048.6" cy="52.9" r="4.4" fill="none" stroke="#7d7d7d" stroke-width="1.3"/><path d="M1051.9 56.3 L1055.6 60" stroke="#7d7d7d" stroke-width="1.5" stroke-linecap="round"/>
<text x="1063.3" y="58.8" font-size="12.6" font-weight="400" fill="#7b7b7b" textLength="139.9" lengthAdjust="spacing" stroke="#7b7b7b" stroke-width="0.35">Search (Cmd + Ctrl + U)</text>
<circle cx="1335.3" cy="52" r="2.5" fill="none" stroke="#5a5a5a" stroke-width="1"/>
<path d="M1330.6 56.4 H1340 C1340 59.2 1338 61 1335.3 61 C1332.6 61 1330.6 59.2 1330.6 56.4 Z" fill="none" stroke="#5a5a5a" stroke-width="1" stroke-linejoin="round"/>
<path d="M1339.6 46.4 H1345.2 a0.8 0.8 0 0 1 0.8 0.8 V50.6 a0.8 0.8 0 0 1 -0.8 0.8 H1342.6 L1340.6 53.2 V51.4 H1339.6 a0.8 0.8 0 0 1 -0.8 -0.8 V47.2 a0.8 0.8 0 0 1 0.8 -0.8 Z" fill="none" stroke="#5a5a5a" stroke-width="1" stroke-linejoin="round"/>
<text x="67.6" y="89.0" font-size="13.2" font-weight="700" fill="#1f1f1f" textLength="37.4" lengthAdjust="spacing" >Home</text>
<rect x="67" y="95" width="38.2" height="2.9" rx="1.4" fill="#2a5699"/>
<text x="128.0" y="89.0" font-size="13.58" font-weight="400" fill="#2b2b2b" textLength="36.0" lengthAdjust="spacing" stroke="#2b2b2b" stroke-width="0.35">Insert</text>
<text x="189.4" y="89.0" font-size="13.2" font-weight="400" fill="#2b2b2b" textLength="31.2" lengthAdjust="spacing" stroke="#2b2b2b" stroke-width="0.35">Draw</text>
<text x="245.6" y="89.0" font-size="13.2" font-weight="400" fill="#2b2b2b" textLength="41.8" lengthAdjust="spacing" stroke="#2b2b2b" stroke-width="0.35">Design</text>
<text x="312.5" y="89.0" font-size="13.2" font-weight="400" fill="#2b2b2b" textLength="40.9" lengthAdjust="spacing" stroke="#2b2b2b" stroke-width="0.35">Layout</text>
<text x="379.3" y="89.0" font-size="13.2" font-weight="400" fill="#2b2b2b" textLength="69.7" lengthAdjust="spacing" stroke="#2b2b2b" stroke-width="0.35">References</text>
<text x="474.2" y="89.0" font-size="13.22" font-weight="400" fill="#2b2b2b" textLength="51.4" lengthAdjust="spacing" stroke="#2b2b2b" stroke-width="0.35">Mailings</text>
<text x="550.5" y="89.0" font-size="13.2" font-weight="400" fill="#2b2b2b" textLength="43.9" lengthAdjust="spacing" stroke="#2b2b2b" stroke-width="0.35">Review</text>
<text x="619.0" y="89.0" font-size="13.2" font-weight="400" fill="#2b2b2b" textLength="29.0" lengthAdjust="spacing" stroke="#2b2b2b" stroke-width="0.35">View</text>
<rect x="1039" y="74.5" width="103.5" height="23.5" rx="5.5" fill="#fff" stroke="#d6d6d6" stroke-width="1"/>
<path d="M1049.6 80.3 H1062 a1.6 1.6 0 0 1 1.6 1.6 V88.4 a1.6 1.6 0 0 1 -1.6 1.6 H1055.2 L1051.6 93.2 V90 H1049.6 a1.6 1.6 0 0 1 -1.6 -1.6 V81.9 a1.6 1.6 0 0 1 1.6 -1.6 Z" fill="none" stroke="#262626" stroke-width="1.15" stroke-linejoin="round"/>
<text x="1069.5" y="91.0" font-size="13.2" font-weight="400" fill="#1f1f1f" textLength="64.9" lengthAdjust="spacing" stroke="#1f1f1f" stroke-width="0.3">Comments</text>
<rect x="1154" y="74.5" width="94.2" height="23.5" rx="5.5" fill="#fff" stroke="#d6d6d6" stroke-width="1"/>
<path d="M1163.6 92.6 L1164.8 87.8 L1174.6 78.6 a1.9 1.9 0 0 1 2.7 0 L1178.2 79.5 a1.9 1.9 0 0 1 0 2.7 L1168.4 91.4 Z M1172.8 80.4 L1176.4 84" fill="none" stroke="#262626" stroke-width="1.1" stroke-linejoin="round"/>
<text x="1184.0" y="91.0" font-size="13.2" font-weight="400" fill="#1f1f1f" textLength="41.4" lengthAdjust="spacing" stroke="#1f1f1f" stroke-width="0.3">Editing</text>
<path d="M1234.40 84.80 L1238.00 88.60 L1241.60 84.80" fill="none" stroke="#2b2b2b" stroke-width="1.25" stroke-linecap="round" stroke-linejoin="round"/>
<rect x="1259" y="74" width="89" height="24" rx="5.5" fill="#185abd"/>
<path d="M1277.2 80.6 H1272.4 a2 2 0 0 0 -2 2 V90.6 a2 2 0 0 0 2 2 H1280.6 a2 2 0 0 0 2 -2 V89.4" fill="none" stroke="#fff" stroke-width="1.15" stroke-linecap="round"/>
<path d="M1280.2 78.8 L1285.4 83.4 L1280.2 88 V85.4 C1277.4 85.2 1275.6 86.2 1274.2 88.6 C1274.4 84.6 1276.6 81.8 1280.2 81.4 Z" fill="none" stroke="#fff" stroke-width="1.15" stroke-linejoin="round"/>
<text x="1290.3" y="91.0" font-size="12.82" font-weight="400" fill="#fff" textLength="34.2" lengthAdjust="spacing" stroke="#fff" stroke-width="0.6">Share</text>
<path d="M1333.40 84.80 L1337.00 88.60 L1340.60 84.80" fill="none" stroke="#fff" stroke-width="1.25" stroke-linecap="round" stroke-linejoin="round"/>
<rect x="56" y="174" width="1302" height="1" fill="#cdcdcd"/>
<rect x="73.6" y="113.5" width="19.8" height="23.2" fill="#fbe2a0" stroke="#f08a33" stroke-width="1"/>
<rect x="76.4" y="115" width="14.6" height="19" fill="#fafafa"/>
<path d="M77.4 116.6 V112.6 H80 C80.4 108.2 86.6 108.2 87 112.6 H89.6 V116.6 Z" fill="#fafafa" stroke="#6e6e6e" stroke-width="1" stroke-linejoin="round"/>
<rect x="85.3" y="120.2" width="15.6" height="19.4" fill="#f5f5f5"/>
<rect x="86.8" y="121.7" width="12.8" height="16.6" fill="#fbfbfb" stroke="#3a3a3a" stroke-width="1"/>
<path d="M105.60 122.00 L108.00 125.00 L110.40 122.00" fill="none" stroke="#2b2b2b" stroke-width="1.6" stroke-linecap="round" stroke-linejoin="round"/>
<text x="76.6" y="152.5" font-size="10.44" font-weight="400" fill="#1f1f1f" textLength="26.7" lengthAdjust="spacing" stroke="#1f1f1f" stroke-width="0.25">Paste</text>
<path d="M124.2 107.6 L129.6 119 M129.9 107.6 L124.5 119" stroke="#a4a4a4" stroke-width="1" stroke-linecap="round"/>
<circle cx="124" cy="120.8" r="1.7" fill="none" stroke="#9cc7e8" stroke-width="1"/><circle cx="130.1" cy="120.8" r="1.7" fill="none" stroke="#9cc7e8" stroke-width="1"/>
<path d="M123.8 142.4 H119.6 V129.8 H125.4 L127 131" fill="none" stroke="#b3b3b3" stroke-width="1"/>
<path d="M125.6 132.6 H131.2 L134.4 135.8 V144.4 H125.6 Z M131.2 132.6 V135.8 H134.4 M128 139 H132.2 M128 141.4 H132.2" fill="none" stroke="#b3b3b3" stroke-width="1" stroke-linejoin="round"/>
<path d="M119.6 158.4 L126 154.4 L131.2 160.4 L126.2 165.6 Z" fill="#fff" stroke="#f08a33" stroke-width="1" stroke-linejoin="round"/>
<path d="M122.4 160.6 L130 161.4 L126.2 165.6 Z" fill="#f9c98a" stroke="#f08a33" stroke-width="0.8" stroke-linejoin="round"/>
<path d="M126.4 153.8 L128.4 152.6 L130 154.2 L133.2 151.4 L134.8 153 L132 156.2 L133.6 157.8 L132 160 Z" fill="#fff" stroke="#3a3a3a" stroke-width="1" stroke-linejoin="round"/>
<rect x="148.1" y="104" width="1" height="62" fill="#d4d4d4"/>
<rect x="159.5" y="109.5" width="98" height="23" rx="3.5" fill="#fff" stroke="#d2d2d2" stroke-width="1"/>
<rect x="260.5" y="109.5" width="53" height="23" rx="3.5" fill="#fff" stroke="#d2d2d2" stroke-width="1"/>
<text x="165.4" y="124.9" font-size="12.2" font-weight="400" fill="#111" textLength="25.2" lengthAdjust="spacing" >Arial</text>
<text x="266.0" y="124.9" font-size="11.33" font-weight="400" fill="#111" textLength="12.6" lengthAdjust="spacing" >16</text>
<path d="M247.60 120.20 L250.20 123.20 L252.80 120.20" fill="none" stroke="#2b2b2b" stroke-width="1.4" stroke-linecap="round" stroke-linejoin="round"/>
<path d="M303.60 120.20 L306.20 123.20 L308.80 120.20" fill="none" stroke="#2b2b2b" stroke-width="1.4" stroke-linecap="round" stroke-linejoin="round"/>
<text x="320.2" y="125.7" font-size="17.4" fill="#3b3b3b" textLength="12.2" lengthAdjust="spacingAndGlyphs">A</text>
<path d="M331.7 116.7 L333.6 114.6 L335.5 116.7" fill="none" stroke="#1e7fd0" stroke-width="1.25" stroke-linecap="round" stroke-linejoin="round"/>
<text x="348.2" y="125.7" font-size="13.8" fill="#3b3b3b">A</text>
<path d="M357.7 114.6 L359.6 116.7 L361.5 114.6" fill="none" stroke="#1e7fd0" stroke-width="1.25" stroke-linecap="round" stroke-linejoin="round"/>
<rect x="374.0" y="112" width="1" height="17" fill="#d4d4d4"/>
<text x="387.2" y="125.7" font-size="13" fill="#3b3b3b">A</text>
<text x="396.9" y="125.7" font-size="13" fill="#3b3b3b">a</text>
<path d="M410.40 119.90 L413.00 122.90 L415.60 119.90" fill="none" stroke="#2b2b2b" stroke-width="1.5" stroke-linecap="round" stroke-linejoin="round"/>
<rect x="427.2" y="112" width="1" height="17" fill="#d4d4d4"/>
<text x="439.8" y="125.7" font-size="17.4" fill="#3b3b3b" textLength="9.6" lengthAdjust="spacingAndGlyphs">A</text>
<g transform="rotate(-38 451.2 124)"><rect x="446.4" y="121.4" width="9.6" height="5.2" rx="0.8" fill="#f5f5f5" stroke="#9b3fb5" stroke-width="1.15"/><path d="M449.6 121.4 V126.6" stroke="#9b3fb5" stroke-width="1"/></g>
<rect x="159" y="141" width="24" height="23.6" rx="3" fill="#c5c5c5"/>
<text x="167.4" y="156.8" font-size="13.2" font-weight="700" fill="#333" textLength="8" lengthAdjust="spacingAndGlyphs">B</text>
<text x="193.4" y="156.8" font-size="14.4" font-style="italic" fill="#3b3b3b" style="font-family:Liberation Serif,serif">I</text>
<text x="217.6" y="156.8" font-size="13.2" fill="#3b3b3b">U</text>
<rect x="218" y="157.8" width="9.2" height="1.1" fill="#3b3b3b"/>
<path d="M237.80 151.85 L240.50 154.95 L243.20 151.85" fill="none" stroke="#2b2b2b" stroke-width="1.5" stroke-linecap="round" stroke-linejoin="round"/>
<text x="254.8" y="157.2" font-size="12.2" fill="#4a4a4a">ab</text>
<rect x="253" y="153.4" width="16" height="1" fill="#4a4a4a"/>
<text x="283.4" y="157.1" font-size="13.4" font-weight="700" fill="#3b3b3b">x</text>
<text x="290.8" y="160.8" font-size="6.8" font-weight="700" fill="#1e7fd0">2</text>
<text x="309.4" y="157.1" font-size="13.4" font-weight="700" fill="#3b3b3b">x</text>
<text x="316.8" y="149.8" font-size="6.8" font-weight="700" fill="#1e7fd0">2</text>
<rect x="332.8" y="144" width="1" height="17" fill="#d4d4d4"/>
<text x="346.9" y="159" font-size="18.4" font-weight="700" fill="#fff" stroke="#1b6ec2" stroke-width="1.6" stroke-linejoin="round">A</text>
<path d="M369.10 151.85 L371.80 154.95 L374.50 151.85" fill="none" stroke="#2b2b2b" stroke-width="1.5" stroke-linecap="round" stroke-linejoin="round"/>
<rect x="384.2" y="157" width="16" height="3.8" fill="#fff129"/>
<path d="M388.2 155.2 L387.6 152.6 L395.4 145.4 L398.6 148.4 L391 155.6 Z M387.6 152.6 L391 155.6 M388.2 155.2 L386.6 156 H389.6" fill="none" stroke="#3b3b3b" stroke-width="1" stroke-linejoin="round"/>
<path d="M407.10 151.85 L409.80 154.95 L412.50 151.85" fill="none" stroke="#2b2b2b" stroke-width="1.5" stroke-linecap="round" stroke-linejoin="round"/>
<text x="425.3" y="155.8" font-size="14.3" fill="#3b3b3b">A</text>
<rect x="422.2" y="157" width="16" height="3.8" fill="#e8141c"/>
<path d="M445.50 151.85 L448.20 154.95 L450.90 151.85" fill="none" stroke="#2b2b2b" stroke-width="1.5" stroke-linecap="round" stroke-linejoin="round"/>
<rect x="469.9" y="104" width="1" height="62" fill="#d4d4d4"/>
<rect x="485" y="112.9" width="3.2" height="3.2" fill="#1e7fd0"/>
<path d="M490 114.5 H500.2" stroke="#3b3b3b" stroke-width="1.25"/>
<rect x="485" y="118.9" width="3.2" height="3.2" fill="#1e7fd0"/>
<path d="M490 120.5 H500.2" stroke="#3b3b3b" stroke-width="1.25"/>
<rect x="485" y="124.9" width="3.2" height="3.2" fill="#1e7fd0"/>
<path d="M490 126.5 H500.2" stroke="#3b3b3b" stroke-width="1.25"/>
<path d="M508.30 119.85 L511.00 122.95 L513.70 119.85" fill="none" stroke="#2b2b2b" stroke-width="1.5" stroke-linecap="round" stroke-linejoin="round"/>
<path d="M522.5 108.8 H542.8 V132.9 H522.5 a3.5 3.5 0 0 1 -3.5 -3.5 V112.3 a3.5 3.5 0 0 1 3.5 -3.5 Z" fill="#c1c1c1"/>
<path d="M542.8 108.8 H551.2 a3.5 3.5 0 0 1 3.5 3.5 V129.4 a3.5 3.5 0 0 1 -3.5 3.5 H542.8 Z" fill="#dfdfdf"/>
<text x="522.7" y="116.8" font-size="6.4" font-weight="700" fill="#1e7fd0">1</text>
<path d="M528.2 114.5 H538" stroke="#3b3b3b" stroke-width="1.25"/>
<text x="522.7" y="122.8" font-size="6.4" font-weight="700" fill="#1e7fd0">2</text>
<path d="M528.2 120.5 H538" stroke="#3b3b3b" stroke-width="1.25"/>
<text x="522.7" y="128.8" font-size="6.4" font-weight="700" fill="#1e7fd0">3</text>
<path d="M528.2 126.5 H538" stroke="#3b3b3b" stroke-width="1.25"/>
<path d="M546.30 119.85 L549.00 122.95 L551.70 119.85" fill="none" stroke="#2b2b2b" stroke-width="1.5" stroke-linecap="round" stroke-linejoin="round"/>
<text x="560.6" y="116.8" font-size="6.2" font-weight="700" fill="#1e7fd0">1</text>
<text x="563.5" y="122.7" font-size="6.6" font-weight="700" fill="#1e7fd0">a</text>
<text x="568.6" y="128.8" font-size="6.2" font-weight="700" fill="#1e7fd0">i</text>
<path d="M566.2 114.5 H576" stroke="#3b3b3b" stroke-width="1.25"/>
<path d="M569.3 120.5 H576" stroke="#3b3b3b" stroke-width="1.25"/>
<path d="M572 126.5 H576" stroke="#3b3b3b" stroke-width="1.25"/>
<path d="M584.00 119.85 L586.70 122.95 L589.40 119.85" fill="none" stroke="#2b2b2b" stroke-width="1.5" stroke-linecap="round" stroke-linejoin="round"/>
<rect x="600.9" y="112" width="1" height="17" fill="#d4d4d4"/>
<path d="M615 114.5 H629" stroke="#3b3b3b" stroke-width="1.25"/>
<path d="M623 118.5 H629" stroke="#3b3b3b" stroke-width="1.25"/>
<path d="M623 122.5 H629" stroke="#3b3b3b" stroke-width="1.25"/>
<path d="M615 126.5 H629" stroke="#3b3b3b" stroke-width="1.25"/>
<path d="M620.9 120.5 H615.4 M617.9 118 L615.3 120.5 L617.9 123" fill="none" stroke="#1e7fd0" stroke-width="1.25" stroke-linejoin="round"/>
<path d="M641 114.5 H655" stroke="#3b3b3b" stroke-width="1.25"/>
<path d="M649 118.5 H655" stroke="#3b3b3b" stroke-width="1.25"/>
<path d="M649 122.5 H655" stroke="#3b3b3b" stroke-width="1.25"/>
<path d="M641 126.5 H655" stroke="#3b3b3b" stroke-width="1.25"/>
<path d="M641 120.5 H646.6 M644.1 118 L646.7 120.5 L644.1 123" fill="none" stroke="#1e7fd0" stroke-width="1.25" stroke-linejoin="round"/>
<rect x="667.7" y="112" width="1" height="17" fill="#d4d4d4"/>
<text x="680.6" y="119.7" font-size="8.7" font-weight="700" fill="#1e7fd0">A</text>
<text x="680.9" y="128.6" font-size="8.5" fill="#3b3b3b" stroke="#3b3b3b" stroke-width="0.3">Z</text>
<path d="M693.5 113.3 V128 M690.2 125 L693.5 128.4 L696.8 125" fill="none" stroke="#3b3b3b" stroke-width="1.2" stroke-linejoin="miter"/>
<rect x="708.9" y="112" width="1" height="17" fill="#d4d4d4"/>
<path d="M729.4 114.6 H734.9 V116 H733.5 V126.8 H732 V116 H730.6 V126.8 H729.1 V121.6 C723.4 121.6 723.4 114.6 729.4 114.6 Z" fill="#3b3b3b"/>
<rect x="481" y="140.9" width="23.9" height="24.1" rx="3.5" fill="#c5c5c5"/>
<path d="M485.9 146.5 H500.2" stroke="#3b3b3b" stroke-width="1.25"/>
<path d="M485.9 150.5 H496" stroke="#3b3b3b" stroke-width="1.25"/>
<path d="M485.9 154.5 H500.2" stroke="#3b3b3b" stroke-width="1.25"/>
<path d="M485.9 158.5 H496" stroke="#3b3b3b" stroke-width="1.25"/>
<path d="M511.9 146.5 H525.9" stroke="#3b3b3b" stroke-width="1.25"/>
<path d="M514.2 150.5 H524" stroke="#3b3b3b" stroke-width="1.25"/>
<path d="M511.9 154.5 H525.9" stroke="#3b3b3b" stroke-width="1.25"/>
<path d="M514.2 158.5 H524" stroke="#3b3b3b" stroke-width="1.25"/>
<path d="M538 146.5 H552.2" stroke="#3b3b3b" stroke-width="1.25"/>
<path d="M542 150.5 H552.2" stroke="#3b3b3b" stroke-width="1.25"/>
<path d="M538 154.5 H552.2" stroke="#3b3b3b" stroke-width="1.25"/>
<path d="M542 158.5 H552.2" stroke="#3b3b3b" stroke-width="1.25"/>
<path d="M564 146.5 H578" stroke="#3b3b3b" stroke-width="1.25"/>
<path d="M564 150.5 H578" stroke="#3b3b3b" stroke-width="1.25"/>
<path d="M564 154.5 H578" stroke="#3b3b3b" stroke-width="1.25"/>
<path d="M564 158.5 H578" stroke="#3b3b3b" stroke-width="1.25"/>
<rect x="591.0" y="144" width="1" height="17" fill="#d4d4d4"/>
<path d="M610.9 146.5 H620" stroke="#3b3b3b" stroke-width="1.25"/>
<path d="M610.9 150.5 H620" stroke="#3b3b3b" stroke-width="1.25"/>
<path d="M610.9 154.5 H620" stroke="#3b3b3b" stroke-width="1.25"/>
<path d="M610.9 158.5 H620" stroke="#3b3b3b" stroke-width="1.25"/>
<path d="M606.5 146.6 V151.7 M606.5 154.4 V159.6 M603.9 149.2 L606.5 146.5 L609.1 149.2 M603.9 157 L606.5 159.7 L609.1 157" fill="none" stroke="#1e7fd0" stroke-width="1.25" stroke-linejoin="round"/>
<path d="M627.30 151.85 L630.00 154.95 L632.70 151.85" fill="none" stroke="#2b2b2b" stroke-width="1.5" stroke-linecap="round" stroke-linejoin="round"/>
<rect x="643.9" y="144" width="1" height="17" fill="#d4d4d4"/>
<rect x="657.1" y="157" width="15.7" height="3.8" fill="#e6e6e6"/>
<path d="M660.3 151.4 L665.5 145.8 L669.6 150 L664.4 155.9 Z" fill="#fafafa" stroke="#3b3b3b" stroke-width="1.1" stroke-linejoin="round"/>
<path d="M665.5 145.8 C664.6 143.6 667.6 143.4 667.4 146.4" fill="none" stroke="#3b3b3b" stroke-width="1"/>
<path d="M668.8 148.4 C671.6 149.2 672.4 151.6 671.6 154" fill="none" stroke="#1b6ec2" stroke-width="1.5" stroke-linecap="round"/>
<path d="M680.20 151.85 L682.90 154.95 L685.60 151.85" fill="none" stroke="#2b2b2b" stroke-width="1.5" stroke-linecap="round" stroke-linejoin="round"/>
<path d="M695 145.5 H710 M695.5 145 V158 M709.5 145 V158 M702.5 145 V158 M695 152.5 H710" fill="none" stroke="#3b3b3b" stroke-width="1" stroke-dasharray="1 1"/>
<path d="M694.9 159.5 H710.1" stroke="#111" stroke-width="1.4"/>
<path d="M718.20 151.85 L720.90 154.95 L723.60 151.85" fill="none" stroke="#2b2b2b" stroke-width="1.5" stroke-linecap="round" stroke-linejoin="round"/>
<rect x="751.9" y="104" width="1" height="62" fill="#d4d4d4"/>
<rect x="763.5" y="105.5" width="195" height="57" rx="4" fill="#fff" stroke="#d6d6d6" stroke-width="1"/>
<rect x="786.4" y="111.6" width="69.2" height="45.2" rx="4" fill="#f6f6f6" stroke="#d2d2d2" stroke-width="1"/>
<path d="M786.9 142.6 H855.1 V153.3 a3.5 3.5 0 0 1 -3.5 3.5 H790.4 a3.5 3.5 0 0 1 -3.5 -3.5 Z" fill="#ebebeb"/>
<rect x="786.9" y="142.2" width="68.2" height="0.8" fill="#e0e0e0"/>
<rect x="866.4" y="111.6" width="69.2" height="45.2" rx="4" fill="#f6f6f6" stroke="#d2d2d2" stroke-width="1"/>
<path d="M866.9 142.6 H935.1 V153.3 a3.5 3.5 0 0 1 -3.5 3.5 H870.4 a3.5 3.5 0 0 1 -3.5 -3.5 Z" fill="#ebebeb"/>
<rect x="866.9" y="142.2" width="68.2" height="0.8" fill="#e0e0e0"/>
<text x="789.4" y="130.7" font-size="9.93" font-weight="700" fill="#111" textLength="64.0" lengthAdjust="spacing" >AaBbCcDdEe</text>
<text x="803.7" y="151.5" font-size="9.83" font-weight="400" fill="#1f1f1f" textLength="33.9" lengthAdjust="spacing" stroke="#1f1f1f" stroke-width="0.2">Caption</text>
<text x="870.0" y="131.9" font-size="13.94" font-weight="700" fill="#404040" textLength="63.0" lengthAdjust="spacing" >1.1  AaBb</text>
<text x="878.3" y="151.5" font-size="9.78" font-weight="400" fill="#1f1f1f" textLength="44.6" lengthAdjust="spacing" stroke="#1f1f1f" stroke-width="0.2">Heading 2</text>
<rect x="961.2" y="105.1" width="35.7" height="35.8" rx="3" fill="#c5c5c5"/>
<rect x="965.9" y="109.8" width="26.3" height="26.4" rx="1.8" fill="#fafafa" stroke="#363636" stroke-width="1.25"/>
<path d="M982.6 131.4 C985.4 127.6 989.6 123.2 993.4 120 C994.6 119.2 995.2 120 994.6 121 C991.6 125.4 987.8 129.8 984.6 133.4 Z" fill="#fbfbfb" stroke="#3a3a3a" stroke-width="1" stroke-linejoin="round"/>
<path d="M972.4 136.5 C975.6 136.3 976.6 134.6 977.6 133 C979.2 130.6 982.4 130.7 983.6 132.6 C985.2 135.2 982.6 138.6 978.6 138.7 C976.2 138.8 973.8 137.9 972.4 136.5 Z" fill="#7cb5ea" stroke="#1f6fc0" stroke-width="0.9"/>
<text x="963.0" y="153.0" font-size="10.8" font-weight="400" fill="#1f1f1f" textLength="30.3" lengthAdjust="spacing" stroke="#1f1f1f" stroke-width="0.25">Styles</text>
<text x="965.9" y="164.7" font-size="10.45" font-weight="400" fill="#1f1f1f" textLength="24.4" lengthAdjust="spacing" stroke="#1f1f1f" stroke-width="0.25">Pane</text>
<rect x="1006.8" y="104" width="1" height="62" fill="#d4d4d4"/>
<rect x="949.9" y="96.5" width="62.6" height="79" fill="none" stroke="#fb2a1c" stroke-width="5"/>
<rect x="1032.75" y="108.55" width="10.6" height="20.4" rx="5.3" fill="#8abde9" stroke="#1868b6" stroke-width="1.3"/>
<path d="M1029.1 123.4 C1029.1 135.6 1046.7 135.6 1046.7 123.4 M1037.9 132.8 V137.8" fill="none" stroke="#4a4a4a" stroke-width="1.25" stroke-linecap="butt"/>
<text x="1020.2" y="153.0" font-size="10.85" font-weight="400" fill="#1f1f1f" textLength="35.8" lengthAdjust="spacing" stroke="#1f1f1f" stroke-width="0.25">Dictate</text>
<rect x="1069.1" y="104" width="1" height="62" fill="#d4d4d4"/>
<path d="M1102.3 109.7 H1091.6 V136.2 H1111.3 V124.1" fill="#fafafa" stroke="#1e88d0" stroke-width="1.05"/>
<path d="M1094.9 120.6 L1098.6 116.9 L1108.6 126.5 L1104.7 130.4 Z" fill="#fcfcfc" stroke="#1e88d0" stroke-width="1" stroke-linejoin="round"/>
<path d="M1098.6 120.9 L1104.7 126.6" stroke="#1e88d0" stroke-width="1.5" stroke-linecap="round"/>
<path d="M1106.4 108 L1116.9 118.3 L1113.1 122.1 L1102.6 111.9 Z" fill="#fcfcfc" stroke="#1e88d0" stroke-width="1" stroke-linejoin="round"/>
<path d="M1102.6 111.9 L1113.1 122.1 L1114.7 120.5 L1104.2 110.3 Z" fill="#1e88d0"/>
<path d="M1112.6 107.4 L1117.8 112.4 L1114.6 114.5 L1110.4 110.4 Z" fill="#fcfcfc" stroke="#1e88d0" stroke-width="1" stroke-linejoin="round"/>
<path d="M1123.60 121.90 L1126.00 124.90 L1128.40 121.90" fill="none" stroke="#2b2b2b" stroke-width="1.6" stroke-linecap="round" stroke-linejoin="round"/>
<text x="1082.0" y="153.0" font-size="10.83" font-weight="400" fill="#1f1f1f" textLength="51.7" lengthAdjust="spacing" stroke="#1f1f1f" stroke-width="0.25">Sensitivity</text>
<rect x="1146.8" y="104" width="1" height="62" fill="#d4d4d4"/>
<rect x="1166.7" y="109.7" width="26.6" height="26.5" fill="none" stroke="#d8400f" stroke-width="1.05"/>
<rect x="1169.8" y="112.8" width="8.3" height="8.1" fill="none" stroke="#d8400f" stroke-width="1.05"/>
<rect x="1181.8" y="112.8" width="8.3" height="8.1" fill="none" stroke="#d8400f" stroke-width="1.05"/>
<rect x="1169.8" y="124.9" width="8.3" height="8.1" fill="none" stroke="#d8400f" stroke-width="1.05"/>
<rect x="1181.8" y="124.9" width="8.3" height="8.1" fill="none" stroke="#d8400f" stroke-width="1.05"/>
<text x="1160.0" y="153.0" font-size="10.85" font-weight="400" fill="#1f1f1f" textLength="39.0" lengthAdjust="spacing" stroke="#1f1f1f" stroke-width="0.25">Add-ins</text>
<rect x="1211.8" y="104" width="1" height="62" fill="#d4d4d4"/>
<path d="M1245 118.4 H1253.8 M1240.4 125.4 H1248.8 M1235 132.3 H1243.8" stroke="#185abd" stroke-width="4.6" stroke-linecap="round"/>
<path d="M1244.1 107.8 L1249.4 111.3 L1232.8 133.9 L1226 138 L1227.3 130.6 Z" fill="#f8f8f8" stroke="#185abd" stroke-width="1.3" stroke-linejoin="round"/>
<path d="M1244.1 107.8 L1249.4 111.3 L1247.4 114 L1242.1 110.5 Z" fill="#185abd" stroke="#185abd" stroke-width="1.3" stroke-linejoin="round"/>
<path d="M1226 138 L1226.6 134.6 L1229 136.2 Z" fill="#185abd" stroke="#185abd" stroke-width="0.8" stroke-linejoin="round"/>
<text x="1226.3" y="153.0" font-size="10.8" font-weight="400" fill="#1f1f1f" textLength="29.0" lengthAdjust="spacing" stroke="#1f1f1f" stroke-width="0.25">Editor</text>
<rect x="1268.8" y="104" width="1" height="62" fill="#d4d4d4"/>
<rect x="1290.75" y="107.75" width="29.5" height="29.3" rx="6" fill="#fefefe" stroke="#3c74f6" stroke-width="1.5"/>
<path d="M1297.3 124.6 V114.2 a1.7 1.7 0 0 1 1.7 -1.7 H1305.9" fill="none" stroke="#303030" stroke-width="1.2"/>
<path d="M1304 132.3 H1301.2 a1.5 1.5 0 0 1 -1.5 -1.5 V116.4 a1.5 1.5 0 0 1 1.5 -1.5 H1308.2 L1313.7 120.6 V124" fill="#fefefe" stroke="#303030" stroke-width="1.2" stroke-linejoin="round"/>
<path d="M1308.2 115 V120.5 H1313.6" fill="none" stroke="#303030" stroke-width="1.1"/>
<circle cx="1309.6" cy="128.7" r="5.6" fill="#0b5ea8" stroke="#fefefe" stroke-width="0.9"/><path d="M1306.4 128.7 H1312.8 M1309.6 125.5 V131.9" stroke="#fff" stroke-width="1.3"/>
<rect x="1289.2" y="128" width="10.5" height="10.6" rx="1.6" fill="#4a7df5"/>
<path d="M1292.4 131.2 H1295.4 L1297 132.8 V135.6 M1296.6 135.8 H1293.6 L1292 134.2 V131.4 M1293 132 L1296.2 135.2" fill="none" stroke="#a9c3ff" stroke-width="0.9"/>
<text x="1282.4" y="153.0" font-size="10.8" font-weight="400" fill="#1f1f1f" textLength="45.3" lengthAdjust="spacing" stroke="#1f1f1f" stroke-width="0.25">Template</text>
<text x="1283.6" y="164.7" font-size="10.8" font-weight="400" fill="#1f1f1f" textLength="41.8" lengthAdjust="spacing" stroke="#1f1f1f" stroke-width="0.25">Chooser</text>
<rect x="1057" y="175" width="301" height="960" fill="#ececec"/>
<rect x="1057" y="175" width="1" height="960" fill="#cdcdcd"/>
<text x="1074.4" y="194.3" font-size="14.53" font-weight="700" fill="#3a3a3a" textLength="42.8" lengthAdjust="spacing" >Styles</text>
<circle cx="1335" cy="189" r="7.2" fill="#6f6f6f"/>
<path d="M1332.2 186.2 L1337.8 191.8 M1337.8 186.2 L1332.2 191.8" stroke="#f2f2f2" stroke-width="1.5" stroke-linecap="round"/>
<text x="1076.5" y="230.3" font-size="12.88" font-weight="400" fill="#2a2a2a" textLength="81.2" lengthAdjust="spacing" >Current style:</text>
<rect x="1324" y="244" width="17" height="24.5" fill="#e6e6e6"/>
<rect x="1077.5" y="244.5" width="247" height="24" fill="#fff" stroke="#bdbdbd" stroke-width="1"/>
<path d="M1327.6 253.4 H1336 L1331.8 260.6 Z" fill="#4a4a4a"/>
<text x="1089.7" y="262.0" font-size="15.82" font-weight="700" fill="#404040" textLength="93.2" lengthAdjust="spacing" >1  Heading 1</text>
<rect x="1076.5" y="300" width="263" height="730" fill="#fff"/>
<rect x="1081.8" y="376.70" width="253" height="23.6" fill="#fff" stroke="#b4b4b4" stroke-width="1"/>
<text x="1092.9" y="391.7" font-size="10.14" font-weight="400" fill="#1c1c1c" textLength="72.9" lengthAdjust="spacing" >Document Map</text>
<rect x="1081.8" y="405.75" width="253" height="23.6" fill="#fff" stroke="#b4b4b4" stroke-width="1"/>
<text x="1286.0" y="420.8" font-size="9.0" font-weight="400" fill="#1c1c1c" textLength="26.0" lengthAdjust="spacing" >Footer</text>
<rect x="1081.8" y="434.80" width="253" height="23.6" fill="#fff" stroke="#b4b4b4" stroke-width="1"/>
<text x="1092.9" y="450.7" font-size="9.89" font-weight="400" fill="#1c1c1c" textLength="34.4" lengthAdjust="spacing" >Header</text>
<rect x="1081.8" y="463.85" width="253" height="23.6" fill="#fff" stroke="#b4b4b4" stroke-width="1"/>
<text x="1093.7" y="482.4" font-size="16.03" font-weight="700" fill="#404040" textLength="194.2" lengthAdjust="spacing" >1  Heading 1,sub-heading</text>
<rect x="1081.8" y="492.90" width="253" height="23.6" fill="#fff" stroke="#b4b4b4" stroke-width="1"/>
<text x="1092.9" y="508.9" font-size="9.6" font-weight="400" fill="#1c1c1c" textLength="32.1" lengthAdjust="spacing" >Normal</text>
<rect x="1081.8" y="521.95" width="253" height="23.6" fill="#fff" stroke="#b4b4b4" stroke-width="1"/>
<text x="1153.2" y="538.8" font-size="14.1" font-weight="400" fill="#a3a3a3" textLength="97.6" lengthAdjust="spacing" >Subline Header</text>
<rect x="1081.8" y="551.00" width="253" height="23.6" fill="#fff" stroke="#b4b4b4" stroke-width="1"/>
<text x="1141.0" y="567.0" font-size="12.1" font-weight="400" fill="#a9a9a9" textLength="122.5" lengthAdjust="spacing" >SublineHeader Level2</text>
<rect x="1081.8" y="580.05" width="253" height="23.6" fill="#fff" stroke="#b4b4b4" stroke-width="1"/>
<text x="1185.5" y="597.5" font-size="17.13" font-weight="700" fill="#404040" textLength="34.9" lengthAdjust="spacing" >Title</text>
<rect x="1081.8" y="609.10" width="253" height="23.6" fill="#fff" stroke="#b4b4b4" stroke-width="1"/>
<text x="1092.9" y="625.3" font-size="9.6" font-weight="700" fill="#333" textLength="29.1" lengthAdjust="spacing" >TOC 1</text>
<rect x="1081.8" y="638.15" width="253" height="23.6" fill="#fff" stroke="#b4b4b4" stroke-width="1"/>
<text x="1092.9" y="655.2" font-size="14.1" font-weight="700" fill="#404040" textLength="90.5" lengthAdjust="spacing" >TOC Heading</text>
<rect x="1076" y="283.2" width="120" height="17.4" rx="5" fill="#fdfdfd" stroke="#cfcfcf" stroke-width="0.8"/>
<text x="1100.0" y="296.0" font-size="12.18" font-weight="400" fill="#262626" textLength="65.0" lengthAdjust="spacing" >New Style...</text>
<text x="1076.5" y="330.6" font-size="12.8" font-weight="400" fill="#2a2a2a" textLength="80.5" lengthAdjust="spacing" >Apply a style:</text>
<g filter="url(#ms)"><rect x="1078" y="271.6" width="262.2" height="110" rx="6.5" fill="#e0e0de" stroke="#bdbdbd" stroke-width="0.9"/></g>
<text x="1092.4" y="293.0" font-size="13" font-weight="400" fill="#262626" textLength="56.2" lengthAdjust="spacing" >Select All</text>
<rect x="1092" y="304" width="234" height="1" fill="#cfcfcd"/>
<text x="1092.4" y="325.6" font-size="13" font-weight="400" fill="#262626" textLength="100.8" lengthAdjust="spacing" >Clear Formatting</text>
<text x="1092.4" y="348.4" font-size="13" font-weight="400" fill="#262626" textLength="72.8" lengthAdjust="spacing" >New Style...</text>
<rect x="1083" y="354.4" width="252" height="21.4" rx="4" fill="#3a5fb8"/>
<text x="1092.4" y="369.7" font-size="13" font-weight="400" fill="#fff" textLength="86.2" lengthAdjust="spacing" stroke="#fff" stroke-width="0.3">Modify Style...</text>
<rect x="1076.5" y="346.5" width="267.5" height="38" fill="none" stroke="#fb2a1c" stroke-width="5"/>
<text x="1076.5" y="1058.7" font-size="13" font-weight="400" fill="#262626" textLength="24.9" lengthAdjust="spacing" >List:</text>
<rect x="1110.5" y="1042.5" width="229" height="23" rx="3.5" fill="url(#sel)" stroke="#c6c6c6" stroke-width="1"/>
<text x="1114.6" y="1058.2" font-size="10.6" font-weight="400" fill="#1c1c1c" textLength="60.4" lengthAdjust="spacing" >Styles in use</text>
<path d="M1330.6 1051.6 H1335.6 L1333.1 1047.6 Z M1330.6 1056.2 H1335.6 L1333.1 1060.2 Z" fill="#444"/>
<rect x="1077" y="1078.8" width="13" height="13" rx="3" fill="#fff" stroke="#c9c9c9" stroke-width="1"/>
<text x="1096.3" y="1090.0" font-size="13" font-weight="400" fill="#262626" textLength="115.7" lengthAdjust="spacing" >Show styles guides</text>
<rect x="1077" y="1100.8" width="13" height="13" rx="3" fill="#fff" stroke="#c9c9c9" stroke-width="1"/>
<text x="1096.3" y="1112.0" font-size="13.01" font-weight="400" fill="#262626" textLength="181.7" lengthAdjust="spacing" >Show direct formatting guides</text>
<path d="M56 1135 H1358 V1153 a10 10 0 0 1 -10 10 H66 a10 10 0 0 1 -10 -10 Z" fill="#f5f5f5"/>
<rect x="56" y="1135" width="1302" height="1" fill="#cfcfcf"/>
<text x="80.2" y="1152.6" font-size="12" font-weight="400" fill="#5c5c5c" textLength="63.8" lengthAdjust="spacing" >Page 3 of 4</text>
<text x="165.8" y="1152.6" font-size="12.15" font-weight="400" fill="#5c5c5c" textLength="59.4" lengthAdjust="spacing" >206 words</text>
<path d="M248.6 1147.6 V1143 a1.5 1.5 0 0 1 1.5 -1.5 H255.6 L259.3 1145.3 V1154.9 a1.5 1.5 0 0 1 -1.5 1.5 H254.2 M254.7 1141.6 V1144.8 a1.4 1.4 0 0 0 1.4 1.4 H259.2" fill="none" stroke="#5c5c5c" stroke-width="1.1" stroke-linejoin="round" stroke-linecap="round"/>
<circle cx="249.4" cy="1153.6" r="4.4" fill="#5e5e5e"/><path d="M247.9 1152.1 L250.9 1155.1 M250.9 1152.1 L247.9 1155.1" stroke="#f5f5f5" stroke-width="1.15" stroke-linecap="round"/>
<text x="282.2" y="1152.6" font-size="12" font-weight="400" fill="#5c5c5c" textLength="129.7" lengthAdjust="spacing" >English (United States)</text>
<circle cx="440.9" cy="1143.4" r="2.1" fill="none" stroke="#5c5c5c" stroke-width="1.05"/>
<path d="M438.9 1144.7 C437 1143.1 434.3 1143.1 434.4 1144.9 C434.5 1146.5 438.3 1146.6 438.6 1148.3 C438.9 1150.7 436.1 1153.6 436.4 1155.5 C436.7 1157.3 438.7 1157.1 439.6 1155.6 M443 1144.7 C444.8 1143.1 447.6 1143.1 447.6 1144.9 C447.6 1146.2 444.6 1146.5 443.4 1147.5" fill="none" stroke="#5c5c5c" stroke-width="1.05" stroke-linecap="round" stroke-linejoin="round"/>
<circle cx="444.5" cy="1153.4" r="4.5" fill="#5e5e5e"/><path d="M444.5 1151 V1154.1" stroke="#f5f5f5" stroke-width="1.35" stroke-linecap="butt"/><circle cx="444.5" cy="1155.7" r="0.75" fill="#f5f5f5"/>
<text x="455.4" y="1152.6" font-size="12.06" font-weight="400" fill="#5c5c5c" textLength="138.6" lengthAdjust="spacing" >Accessibility: Investigate</text>
<path d="M935.2 1155 L946.4 1143.8 M942.4 1143.5 H946.8 V1147.9 M934.8 1151 V1155.4 H939.2" fill="none" stroke="#5c5c5c" stroke-width="1.05" stroke-linecap="round" stroke-linejoin="round"/>
<text x="958.4" y="1152.6" font-size="12" font-weight="400" fill="#5c5c5c" textLength="33.6" lengthAdjust="spacing" >Focus</text>
<rect x="1006" y="1138.6" width="31" height="21.4" rx="3" fill="#b9b9b9"/>
<path d="M1015.6 1141.6 H1023 L1027.4 1146 V1157.6 H1015.6 Z" fill="#3a3a3a"/>
<path d="M1023 1141.6 V1146 H1027.4 Z" fill="#8a8a8a"/>
<path d="M1017.6 1148.4 H1025.4 M1017.6 1150.6 H1025.4 M1017.6 1152.8 H1025.4 M1017.6 1155 H1025.4" stroke="#cfcfcf" stroke-width="0.9"/>
<g fill="none" stroke="#5c5c5c" stroke-width="1"><circle cx="1057.9" cy="1149.2" r="7.9"/><ellipse cx="1057.9" cy="1149.2" rx="3.6" ry="7.9"/><path d="M1050.6 1146.4 H1065.2 M1050.6 1152 H1065.2"/></g>
<path d="M1085.8 1143.4 H1102.2 M1085.8 1149.2 H1099.3 M1085.8 1155 H1097.6" stroke="#5c5c5c" stroke-width="1.05" stroke-linecap="round"/>
<path d="M1121.2 1143 H1131.4 M1121.2 1146.6 H1128 M1121.2 1150.2 H1124.6" stroke="#5c5c5c" stroke-width="1.05" stroke-linecap="round"/>
<path d="M1123.6 1157.6 L1124.8 1153.2 L1134.2 1143.8 a1.7 1.7 0 0 1 2.4 0 L1137.2 1144.4 a1.7 1.7 0 0 1 0 2.4 L1127.8 1156.2 Z M1132.6 1145.6 L1135.4 1148.4" fill="none" stroke="#5c5c5c" stroke-width="1" stroke-linejoin="round"/>
<rect x="1155.6" y="1148.6" width="7.4" height="1.3" fill="#8c8c8c"/>
<rect x="1170.3" y="1146.8" width="99" height="4.8" rx="2.4" fill="#bababa"/>
<rect x="1224" y="1147.2" width="1.2" height="3.8" fill="#9a9a9a"/>
<circle cx="1230.7" cy="1149.2" r="7.4" fill="#fff" stroke="#d0d0d0" stroke-width="0.6" filter="url(#ks)"/>
<path d="M1276.8 1149.2 H1285 M1280.9 1145.1 V1153.3" stroke="#8c8c8c" stroke-width="1.3"/>
<text x="1302.6" y="1152.7" font-size="11.89" font-weight="400" fill="#5c5c5c" textLength="30.4" lengthAdjust="spacing" >201%</text>
</svg>
</body></html>
